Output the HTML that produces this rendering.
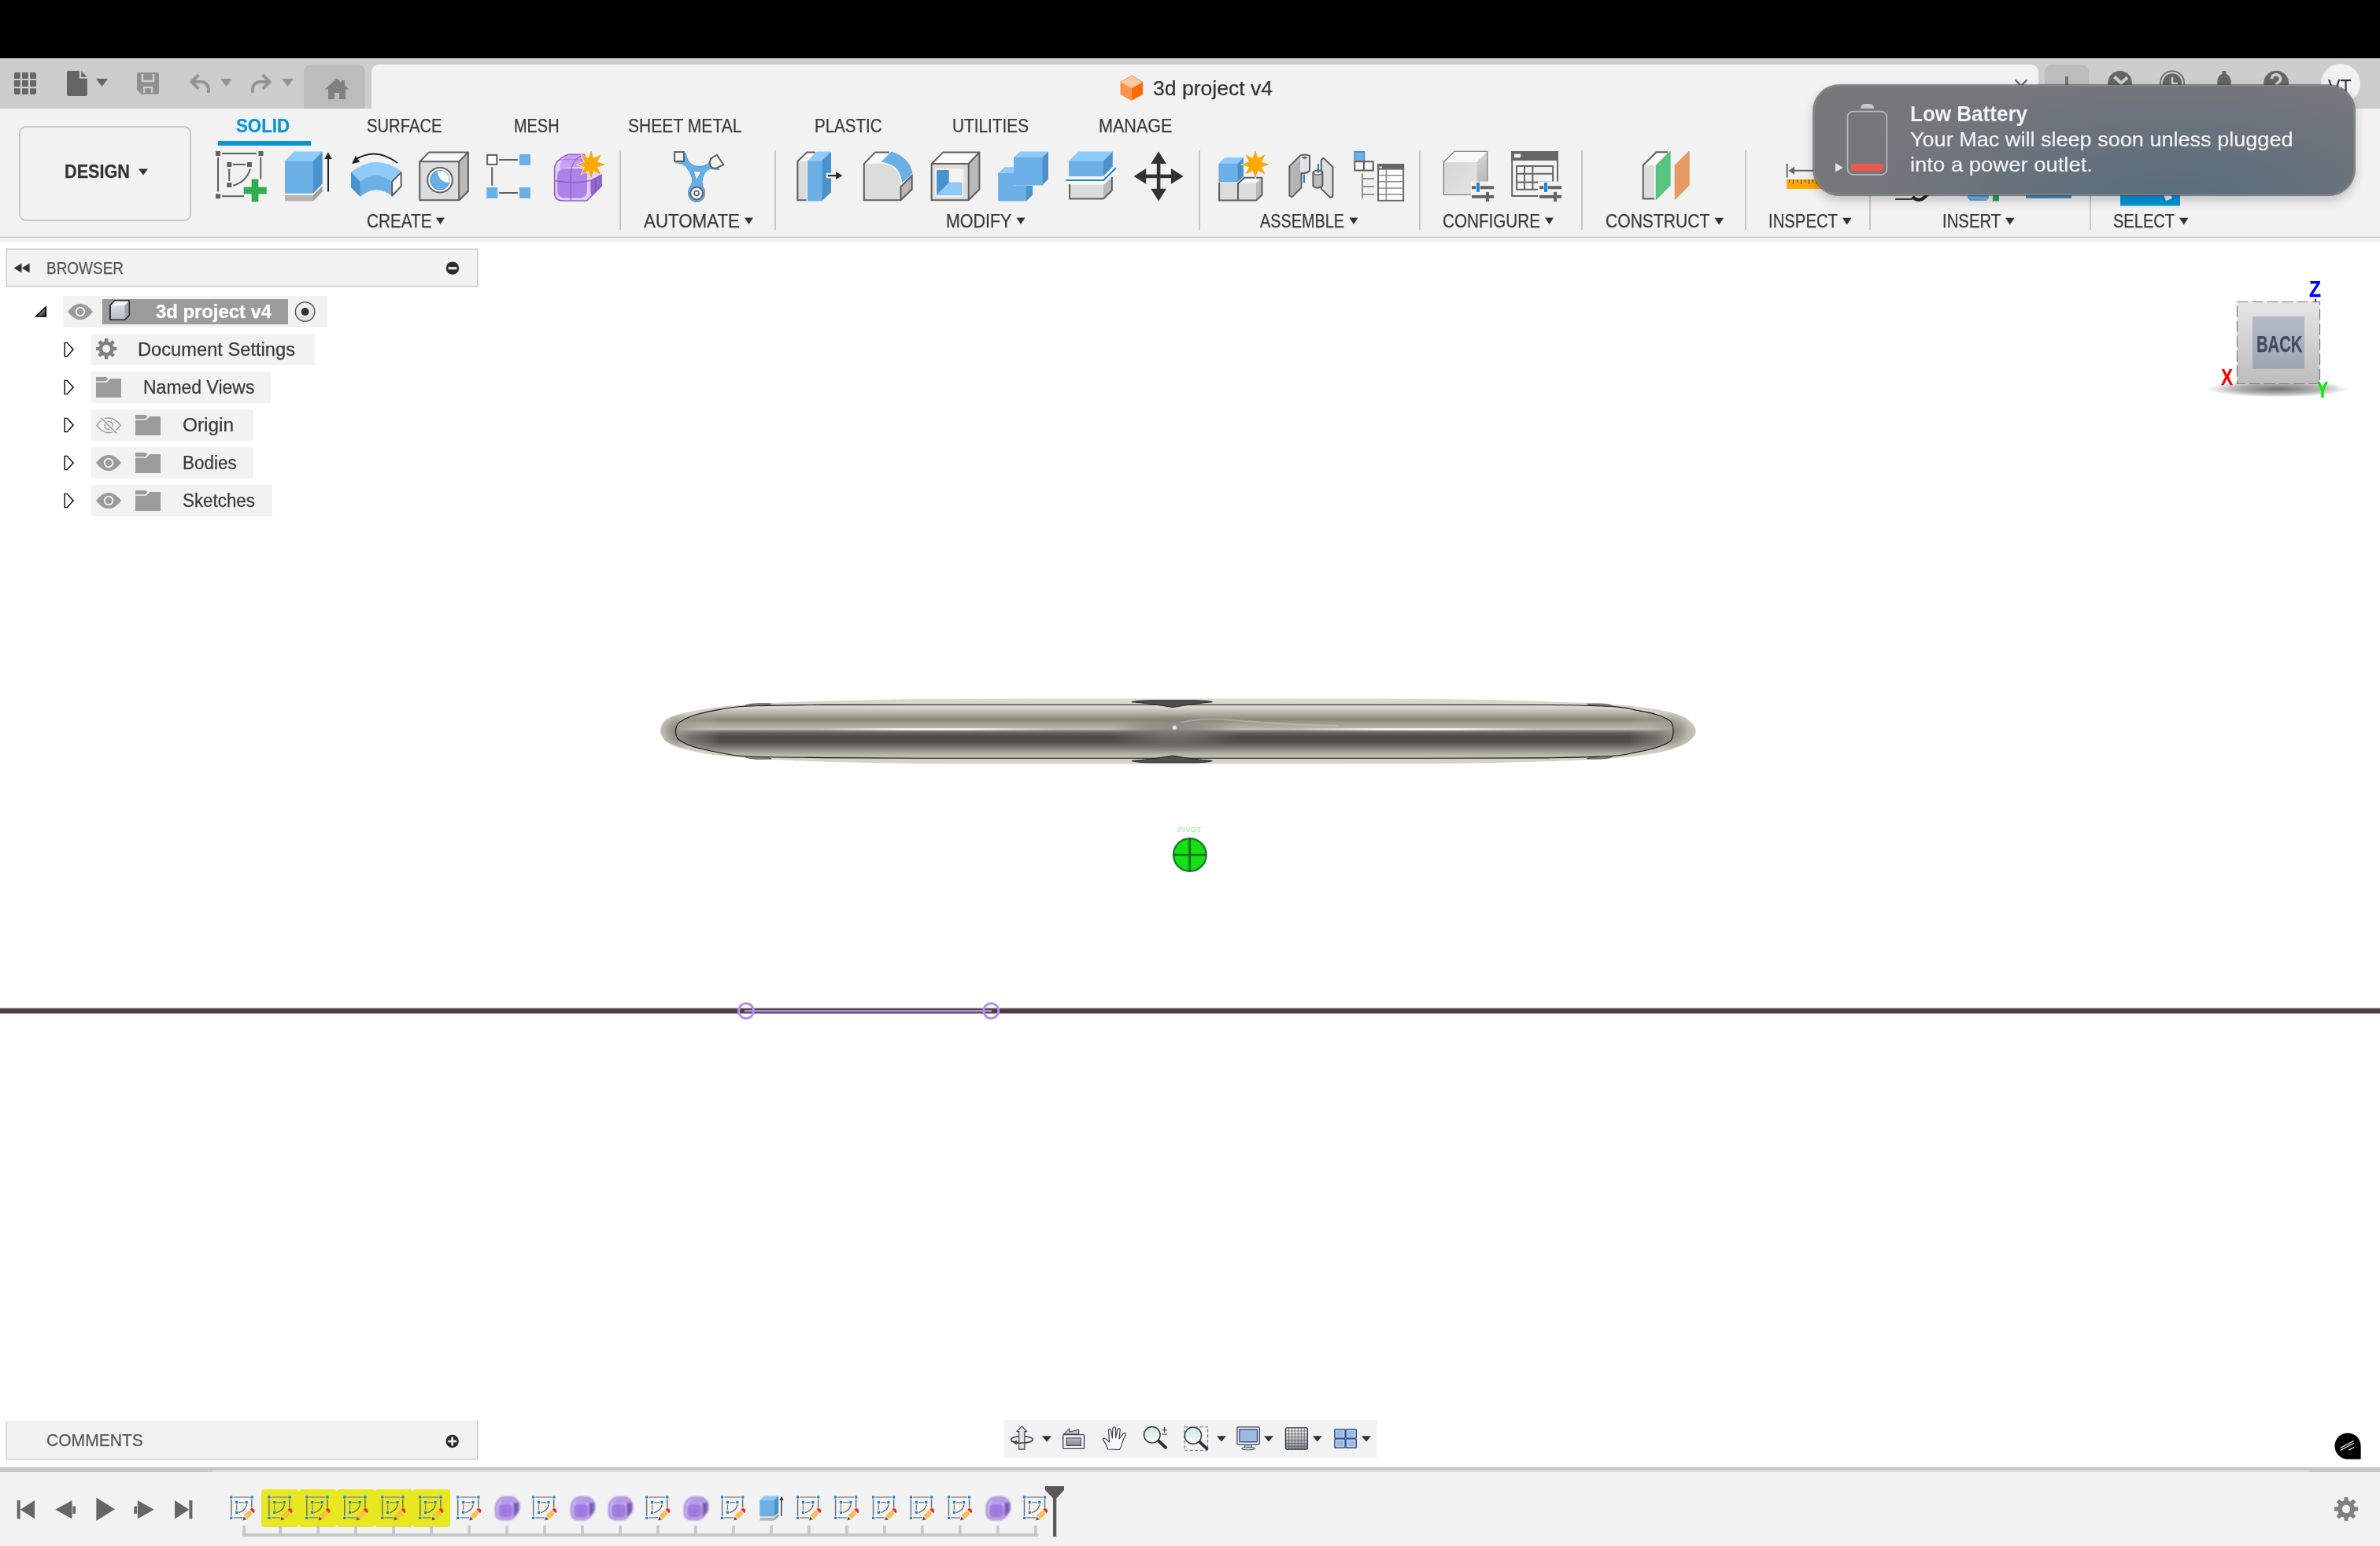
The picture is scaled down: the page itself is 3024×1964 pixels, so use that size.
<!DOCTYPE html>
<html><head><meta charset="utf-8"><title>Fusion</title>
<style>
*{margin:0;padding:0;box-sizing:border-box;}
html,body{width:3024px;height:1964px;overflow:hidden;background:#fff;font-family:"Liberation Sans",sans-serif;}
body{position:relative;}
.a{position:absolute;}
.t{position:absolute;white-space:nowrap;line-height:1;}
svg{position:absolute;overflow:visible;}
.sep{top:191px;width:2px;height:101px;background:#c6c6c6;}
.t{-webkit-text-stroke:0.25px currentColor;}

</style></head><body>
<!-- top black bar -->
<div class="a" style="left:0;top:0;width:3024px;height:74px;background:#000;"></div>
<!-- tab strip -->
<div class="a" style="left:0;top:74px;width:3024px;height:64px;background:#cdcdcd;"></div>
<div class="a" style="left:386px;top:82px;width:78px;height:56px;background:#bcbcbc;border-radius:9px 9px 0 0;"></div>
<div class="a" style="left:472px;top:82px;width:2118px;height:56px;background:#f2f2f2;border-radius:9px 9px 0 0;"></div>
<div class="a" style="left:2598px;top:82px;width:56px;height:56px;background:#bdbdbd;border-radius:9px 9px 0 0;"></div>
<div class="a" style="left:2948.800px;top:80.900px;width:50px;height:50px;background:#f1f1f1;border-radius:50%;"></div>
<!-- toolbar -->
<div class="a" style="left:0;top:138px;width:3024px;height:170px;background:#f2f2f2;"></div>
<div class="a" style="left:0;top:301px;width:3024px;height:1px;background:#c8c8c8;"></div><div class="a" style="left:0;top:300px;width:3024px;height:3px;background:rgba(200,200,200,0.25);"></div>
<div class="a" style="left:23.500px;top:159.500px;width:219.500px;height:121px;border:2px solid #c8c8c8;border-radius:9px;"></div>
<div class="a" style="left:277px;top:179px;width:118px;height:6px;background:#0696d7;"></div>
<!-- toolbar separators -->
<div class="a sep" style="left:787px;"></div>
<div class="a sep" style="left:984px;"></div>
<div class="a sep" style="left:1523px;"></div>
<div class="a sep" style="left:1803px;"></div>
<div class="a sep" style="left:2009px;"></div>
<div class="a sep" style="left:2217px;"></div>
<div class="a sep" style="left:2375px;"></div>
<div class="a sep" style="left:2655px;"></div>
<!-- browser header -->
<div class="a" style="left:8px;top:316px;width:599px;height:48px;background:#f2f2f2;border:1px solid #c4c4c4;box-shadow:0 0 0 1px rgba(200,200,200,0.35);"></div>
<!-- browser rows -->
<div class="a" style="left:80px;top:376px;width:336px;height:40px;background:#f2f2f2;"></div>
<div class="a" style="left:130px;top:380px;width:236px;height:32px;background:#9b9b9b;"></div>
<div class="a" style="left:116px;top:424px;width:284px;height:40px;background:#f2f2f2;"></div>
<div class="a" style="left:116px;top:472px;width:228px;height:40px;background:#f2f2f2;"></div>
<div class="a" style="left:116px;top:520px;width:206px;height:40px;background:#f2f2f2;"></div>
<div class="a" style="left:116px;top:568px;width:206px;height:40px;background:#f2f2f2;"></div>
<div class="a" style="left:116px;top:616px;width:230px;height:40px;background:#f2f2f2;"></div>
<!-- canvas line -->
<div class="a" style="left:0;top:1282px;width:3024px;height:4px;background:#4e3f3f;"></div>
<!-- bottom -->
<div class="a" style="left:8px;top:1806px;width:599px;height:48px;background:#f2f2f2;border:1px solid #c4c4c4;border-top:none;box-shadow:0 0 0 1px rgba(200,200,200,0.35);"></div>
<div class="a" style="left:1276px;top:1804px;width:474px;height:48px;background:#f2f2f2;"></div>
<div class="a" style="left:0;top:1864px;width:3024px;height:6px;background:#c8c8c8;"></div><div class="a" style="left:270px;top:1868px;width:2664px;height:2px;background:#dedede;"></div>
<div class="a" style="left:0;top:1870px;width:3024px;height:94px;background:#f2f2f2;"></div>
<!-- timeline yellow highlight -->
<div class="a" style="left:332.2px;top:1892px;width:48.100px;height:48px;background:#e7e81f;border-radius:4px;"></div><div class="a" style="left:380.2px;top:1892px;width:48.100px;height:48px;background:#e7e81f;border-radius:4px;"></div><div class="a" style="left:428.3px;top:1892px;width:48.100px;height:48px;background:#e7e81f;border-radius:4px;"></div><div class="a" style="left:476.3px;top:1892px;width:48.100px;height:48px;background:#e7e81f;border-radius:4px;"></div><div class="a" style="left:524.4px;top:1892px;width:48.100px;height:48px;background:#e7e81f;border-radius:4px;"></div>
<svg width="3024" height="1964" viewBox="0 0 3024 1964" style="left:0;top:0;"><!-- quick access: grid -->
<rect x="17.900" y="92" width="28.100" height="28.100" rx="2.300" fill="#666"/>
<path d="M26.900 91 V121 M36.950 91 V121 M17 101 H47 M17 111.050 H47" stroke="#cdcdcd" stroke-width="2.200" fill="none"/>
<!-- file -->
<path d="M87 90 H100.800 V99.800 H110.900 V120 a2 2 0 0 1 -2 2 H87 a2 2 0 0 1 -2 -2 V92 a2 2 0 0 1 2 -2 z" fill="#656565"/>
<path d="M103.200 90.300 L110.700 97.800 H103.200 z" fill="#656565"/>
<path d="M122 100 H137.100 L129.550 110.100 z" fill="#666"/>
<!-- save -->
<path d="M176 92.100 h24 a2 2 0 0 1 2 2 v23.700 a2 2 0 0 1 -2 2 h-20.200 l-5.800 -5.800 v-19.900 a2 2 0 0 1 2 -2 z" fill="#909090"/>
<path d="M181 94 V103 H195 V94" fill="none" stroke="#cdcdcd" stroke-width="2.300"/>
<path d="M183.100 118 V111.200 H193 V118" fill="none" stroke="#cdcdcd" stroke-width="2.200"/>
<!-- undo -->
<path d="M252.300 95 L243.400 103.900 L252.300 112.800 M244 103.900 H255.500 A9.500 9.500 0 0 1 265 113.400 V117.700" fill="none" stroke="#939393" stroke-width="3.900" stroke-linejoin="miter"/>
<path d="M280.100 100 H295 L287.550 110 z" fill="#939393"/>
<!-- redo -->
<path d="M333.700 95 L342.600 103.900 L333.700 112.800 M342 103.900 H330.500 A9.500 9.500 0 0 0 321 113.400 V117.700" fill="none" stroke="#939393" stroke-width="3.900" stroke-linejoin="miter"/>
<path d="M358.100 100 H372.900 L365.500 110 z" fill="#939393"/>
<!-- home -->
<path d="M428 99.5 l-15.5 14 h4.5 v12.5 h8 v-8 h6 v8 h8 v-12.5 h4.5 l-5.5 -5 v-6.500 h-4 v3 z" fill="#808080"/>
<!-- tab close x -->
<path d="M2560.500 101.500 l15 15 M2575.500 101.500 l-15 15" stroke="#666" stroke-width="2.400" fill="none"/>
<!-- plus -->
<path d="M2626 97 v26 M2613 110 h26" stroke="#777" stroke-width="4" fill="none"/>
<!-- right icons -->
<circle cx="2693.600" cy="105.400" r="15.400" fill="#666"/>
<path d="M2686.500 97.500 L2695 105.500 L2703 98.500" stroke="#cdcdcd" stroke-width="4" fill="none"/>
<circle cx="2760" cy="105.600" r="15.200" fill="none" stroke="#666" stroke-width="1.700"/>
<circle cx="2760" cy="105.600" r="12.300" fill="#666"/>
<path d="M2760 98 v8 h7" stroke="#cdcdcd" stroke-width="2.6" fill="none"/>
<path d="M2823.500 90 h5 v3.800 a8.600 10.500 0 0 1 6.200 10.500 v12 l3 4 h-23.400 l3 -4 v-12 a8.600 10.500 0 0 1 6.200 -10.500 z" fill="#666"/>
<circle cx="2892.100" cy="105.800" r="16" fill="#666"/>
<path d="M2886.500 100 a5.500 5.500 0 1 1 8 5 q-2.500 1.500 -2.500 5" stroke="#cdcdcd" stroke-width="3.6" fill="none"/>
<circle cx="2892" cy="115.500" r="2.200" fill="#cdcdcd"/>
<!-- DESIGN arrow -->
<path d="M176 214.500 h12 l-6 8 z" fill="#333"/>
<!-- doc cube -->
<path d="M1437.800 96.100 L1451.900 104.200 L1437.800 112.100 L1424 104.200 z" fill="#ffc8a0"/>
<path d="M1424 104.200 L1437.800 112.100 V127.600 L1424 119.800 z" fill="#ff9248"/>
<path d="M1451.900 104.200 L1437.800 112.100 V127.600 L1451.900 119.800 z" fill="#ff6a00"/>
<path d="M1437.800 96.100 L1451.900 104.200 V119.800 L1437.800 127.600 L1424 119.800 V104.200 z" fill="none" stroke="#e8782a" stroke-width="0.700"/>
<!-- group label arrows -->
<g fill="#333">
<path d="M554 276.600 h11 l-5.500 8.400 z"/>
<path d="M946 276.600 h11 l-5.500 8.400 z"/>
<path d="M1291.500 276.600 h11 l-5.500 8.400 z"/>
<path d="M1714.500 276.600 h11 l-5.500 8.400 z"/>
<path d="M1963 276.600 h11 l-5.500 8.400 z"/>
<path d="M2178.500 276.800 h11.500 l-5.750 8.600 z"/>
<path d="M2341 276.800 h11.500 l-5.750 8.600 z"/>
<path d="M2548 276.800 h11.500 l-5.750 8.600 z"/>
<path d="M2769 276.800 h11.500 l-5.750 8.600 z"/>
</g>
<!-- Create sketch -->
<g fill="#606060" stroke="none">
<rect x="274" y="192" width="6" height="6"/><rect x="328.500" y="192" width="6" height="6"/><rect x="274" y="246.300" width="6" height="6"/>
<rect x="288.300" y="206" width="6" height="6"/><rect x="314" y="206" width="6" height="6"/><rect x="288.300" y="232" width="6" height="6"/>
</g>
<g stroke="#5e5e5e" stroke-width="2" fill="none">
<path d="M282 195 H326 M277 200 V243.500 M331.300 200 V227.600 M282 249.200 H310 M296.300 209 H312 M291.200 214.500 V230"/>
<path d="M318 214.500 Q313 231 296.300 235.700"/>
</g>
<path d="M320 228 h8 v10 h10.300 v8 h-10.300 v10 h-8 v-10 h-10 v-8 h10 z" fill="#2bb04a" stroke="#1f9d3f" stroke-width="0.600"/>
<!-- Extrude -->
<path d="M362 204.200 H398 V245.800 H362 z" fill="#6aafe6"/>
<path d="M362 204.200 L373.700 192.400 H409.700 L398 204.200 z" fill="#8fcbfa"/>
<path d="M398 204.200 L409.700 192.400 V233.200 L398 245.800 z" fill="#4893ce"/>
<path d="M362 248 H398 V255.600 H362 z" fill="#b6b6b6"/>
<path d="M398 248 L409.700 236 V243.500 L398 255.600 z" fill="#a0a0a0"/>
<path d="M417 243.500 V200" stroke="#222" stroke-width="2" fill="none"/>
<path d="M417 193.500 l4.800 8.500 h-9.600 z" fill="#222"/>
<!-- Revolve -->
<path d="M505 207 Q478 186 451 203" stroke="#222" stroke-width="2" fill="none"/>
<path d="M447 208.300 l5 -10.500 l5.200 8 z" fill="#222"/>
<path d="M446 218.600 Q477 194 509.600 217 L498.200 230.700 Q477 214.500 457.800 230.700 z" fill="#8fcbfa"/>
<path d="M457.800 230.700 Q477 214.500 498.200 230.700 V248.800 Q477 233 457.800 249.900 z" fill="#6aafe6"/>
<path d="M446 218.600 L457.800 230.700 V249.900 L446 238.200 z" fill="#4893ce"/>
<path d="M498.200 230.700 L509.600 219 V236.700 L498.200 248.800 z" fill="#fff" stroke="#5e5e5e" stroke-width="2" stroke-linejoin="round"/>
<!-- Hole -->
<path d="M532.300 204.200 L544.100 192.400 H595.800 L584.200 204.200 z" fill="#f6f6f6"/>
<path d="M584.200 204.200 L595.800 192.400 V243.500 L584.200 255.200 z" fill="#b9b9b9"/>
<path d="M532.300 204.200 H584.200 V255.200 H532.300 z" fill="#dcdcdc"/>
<path d="M533.300 205.200 L545.100 193.400 H594.800 V243 L583.200 254.200 H533.300 z M533.300 205.200 H583.200 V254.200 M583.200 205.200 L594.800 193.400" fill="none" stroke="#5e5e5e" stroke-width="2" stroke-linejoin="miter"/>
<circle cx="559" cy="228.700" r="15.800" fill="#fff" stroke="#5e5e5e" stroke-width="2"/>
<circle cx="559" cy="228.700" r="12.300" fill="#6aafe6" stroke="#4a8cc4" stroke-width="1"/>
<clipPath id="hc"><circle cx="559" cy="228.700" r="11.800"/></clipPath><circle cx="569.500" cy="218.500" r="13.200" fill="#fff" clip-path="url(#hc)"/>
<!-- Pattern -->
<rect x="619.200" y="196.900" width="12" height="12" fill="#fff" stroke="#5e5e5e" stroke-width="2"/>
<rect x="660" y="195.900" width="14" height="14" fill="#6aafe6"/>
<rect x="618.200" y="238" width="14" height="14" fill="#6aafe6"/>
<rect x="660" y="238" width="14" height="14" fill="#6aafe6"/>
<path d="M634.300 203 H657.800 M625.200 212.200 V235.700 M634.300 245 H657.800" stroke="#5e5e5e" stroke-width="2" fill="none"/>
<!-- Form -->
<clipPath id="fclip"><path d="M722.200 196.300 H742 L764.100 222 V236.400 L745.400 255.100 H715.200 Q704.600 255.100 704.600 244.500 V214.200 Q705 203 722.200 196.300 z"/></clipPath>
<path d="M722.200 196.300 H742 L764.100 222 V236.400 L745.400 255.100 H715.200 Q704.600 255.100 704.600 244.500 V214.200 Q705 203 722.200 196.300 z" fill="#e0ccf8"/>
<g clip-path="url(#fclip)">
<path d="M712 208 Q716 199 724 197 H745 L760 212 H728 Q722 212 712 214 z" fill="#c89dfd"/>
<rect x="708.100" y="214.200" width="37.800" height="37.400" rx="8.500" fill="#ab82e8"/>
<path d="M750.300 229 Q757 226 764.100 221 V236.400 L752 249 Q750.300 246 750.300 242 z" fill="#9265d0"/>
<path d="M725.300 254.500 V222 Q725.300 205 738 198 M705 229.500 Q728 234 749.500 229.500 Q757 227 763.500 223 M756.700 226.500 V244" stroke="#7a54b0" stroke-width="1.300" fill="none" opacity="0.750"/>
<path d="M708 203.500 Q730 201 744 204" stroke="#9a70d0" stroke-width="1.200" fill="none" opacity="0.700"/>
</g>
<path d="M722.200 196.300 H742 L764.100 222 V236.400 L745.400 255.100 H715.200 Q704.600 255.100 704.600 244.500 V214.200 Q705 203 722.200 196.300 z" fill="none" stroke="#8a5fc4" stroke-width="1.500" stroke-linejoin="round"/>
<path d="M751.0,189.7 L754.8,199.8 L764.6,195.4 L760.2,205.2 L770.3,209.0 L760.2,212.8 L764.6,222.6 L754.8,218.2 L751.0,228.3 L747.2,218.2 L737.4,222.6 L741.8,212.8 L731.7,209.0 L741.8,205.2 L737.4,195.4 L747.2,199.8 z" fill="#f6f2ea"/><path d="M751.0,192.2 L754.1,201.6 L762.9,197.1 L758.4,205.9 L767.8,209.0 L758.4,212.1 L762.9,220.9 L754.1,216.4 L751.0,225.8 L747.9,216.4 L739.1,220.9 L743.6,212.1 L734.2,209.0 L743.6,205.9 L739.1,197.1 L747.9,201.6 z" fill="#ffa800" stroke="#e69600" stroke-width="0.600"/>
<!-- Automate -->
<path d="M858.400 206.800 Q867 207.500 871.500 211.500 Q877 218 879.500 226 Q880.500 232 877.500 236 Q874 240 874.500 246 A10.600 10.600 0 0 0 895.700 246 Q896 240 892.600 236 Q891.500 230 892.800 225.500 Q896 217 902 214.300 L913.800 215.600 L903 200 Q902 208 895 210.500 Q886.600 213 879 209 Q872.500 204.500 871.500 194.500 z" fill="#66b0e6" stroke="#4a94cf" stroke-width="0.900" stroke-linejoin="round"/>
<path d="M881 217.300 L891.100 217.800 L885.100 229.400 z" fill="#f2f2f2" stroke="#4a94cf" stroke-width="0.900" stroke-linejoin="round"/>
<rect x="857.100" y="193.100" width="11.800" height="11.800" fill="#f4f4f4" stroke="#5e5e5e" stroke-width="2"/>
<path d="M910.800 196.900 L919.400 209.200 L908.800 214.200 Q900.800 212.500 902 205 Q903 200.500 910.800 196.900 z" fill="#f4f4f4" stroke="#5e5e5e" stroke-width="2" stroke-linejoin="round"/>
<circle cx="885.100" cy="245.500" r="7.900" fill="#f4f4f4" stroke="#5e5e5e" stroke-width="2"/>
<circle cx="885.100" cy="245.500" r="3" fill="none" stroke="#5c5c5c" stroke-width="1.500"/>
<!-- Press pull -->
<path d="M1013.400 205 L1025.200 193.400 H1036 L1025 205 z" fill="#fafafa"/>
<path d="M1013.400 205 H1025 V254.200 H1013.400 z" fill="#dcdcdc"/>
<path d="M1024.500 254.200 H1013.400 V205 L1025.200 193.400 H1036" fill="none" stroke="#5e5e5e" stroke-width="2"/>
<path d="M1026 204.200 H1044.200 V255.600 H1026 z" fill="#6aafe6"/>
<path d="M1026 204.200 L1037.800 192.400 H1056 L1044.200 204.200 z" fill="#8fcbfa"/>
<path d="M1044.200 204.200 L1056 192.400 V244.300 L1044.200 255.600 z" fill="#4893ce"/>
<rect x="1050" y="219.800" width="7" height="6.600" fill="#f6f6f6"/>
<path d="M1052 223.100 H1063" stroke="#2a2a2a" stroke-width="2.200" fill="none"/>
<path d="M1062 218.200 L1070.500 223.100 L1062 228.100 z" fill="#2a2a2a"/>
<!-- Fillet -->
<path d="M1097.800 208 L1112 193.400 H1130 L1119.500 205.700 z" fill="#fafafa"/>
<path d="M1097.800 208 H1121 Q1144.500 210 1144.500 237.500 V254.200 H1097.800 z" fill="#dcdcdc"/>
<path d="M1144.500 237.500 L1159.600 222.400 V240.500 L1144.500 254.800 z" fill="#b9b9b9"/>
<path d="M1119.500 205.700 L1132.400 192.400 Q1155 199 1159.600 220 L1146 233 Q1144 209 1119.500 205.700 z" fill="#6aafe6"/>
<path d="M1121 207 Q1145 210 1145.500 235" fill="none" stroke="#f4f4f4" stroke-width="1.400"/>
<path d="M1129.500 193.400 H1112 L1097.800 208 V254.200 H1144.500 L1158.600 240.500 V223.500 L1144.500 237.500 V254.200" fill="none" stroke="#5e5e5e" stroke-width="2"/>
<!-- Shell -->
<path d="M1183.600 208 L1198.400 193.400 H1244.400 L1230.700 208 z" fill="#fafafa"/>
<path d="M1230.700 208 L1244.400 193.400 V240.500 L1230.700 254.200 z" fill="#b9b9b9"/>
<path d="M1183.600 208 H1230.700 V254.200 H1183.600 z" fill="#dcdcdc"/>
<rect x="1188" y="214" width="36.200" height="36" fill="#f4f4f4"/>
<path d="M1190.100 216 H1205.700 V232.200 L1190.100 247.600 z" fill="#4893ce"/>
<path d="M1190.100 247.600 L1205.700 232.200 H1222 V247.600 z" fill="#8fcbfa" stroke="#6aafe6" stroke-width="0.800"/>
<path d="M1183.600 208 L1198.400 193.400 H1244.400 V240.500 L1230.700 254.200 H1183.600 z M1183.600 208 H1230.700 V254.200 M1230.700 208 L1244.400 193.400" fill="none" stroke="#5e5e5e" stroke-width="2"/>
<!-- Combine -->
<path d="M1288 200 H1324.200 V235.500 H1288 z" fill="#6aafe6"/>
<path d="M1288 200 L1296 192.400 H1332 L1324.200 200 z" fill="#8fcbfa"/>
<path d="M1324.200 200 L1332 192.400 V227.600 L1324.200 235.500 z" fill="#4893ce"/>
<path d="M1268.200 220 L1276.500 212.200 H1288 V220 z" fill="#8fcbfa"/>
<path d="M1268.200 220 H1288 V235.500 H1304 V255.600 H1268.200 z" fill="#6aafe6"/>
<path d="M1304 236 H1312 V247.700 L1304 255.600 z" fill="#4893ce"/>
<!-- Split body -->
<path d="M1358 204.200 H1402 V223.900 H1358 z" fill="#6aafe6"/>
<path d="M1358 204.200 L1370 192.400 H1413.800 L1402 204.200 z" fill="#8fcbfa"/>
<path d="M1402 204.200 L1413.800 192.400 V211.800 L1402 223.900 z" fill="#4893ce"/>
<path d="M1359 235 H1402 V252.600 H1359 z" fill="#dcdcdc"/>
<path d="M1402 235 L1412.800 225 V242 L1402 252.600 z" fill="#b9b9b9"/>
<path d="M1359 234 V252.600 H1402 L1412.800 242 V225" fill="none" stroke="#5e5e5e" stroke-width="2"/>
<path d="M1354 228.900 H1402.300 L1418 213.300" fill="none" stroke="#f8f8f8" stroke-width="7"/>
<path d="M1354 228.900 H1402.300 L1418 213.300" fill="none" stroke="#1a86e0" stroke-width="2"/>
<!-- Move -->
<g fill="#333">
<rect x="1469.800" y="205" width="4.600" height="38"/><rect x="1453" y="221.600" width="38" height="4.600"/>
<path d="M1472.100 192.400 L1482 208 H1462.200 z"/><path d="M1472.100 255.400 L1482 239.800 H1462.200 z"/>
<path d="M1440.600 223.900 L1456.200 214 V233.800 z"/><path d="M1503.700 223.900 L1488 214 V233.800 z"/>
</g>
<!-- New component -->
<path d="M1549.400 232.400 H1572.200 V254.200 H1549.400 z" fill="#dcdcdc"/>
<path d="M1573.700 232.400 H1596 V254.200 H1573.700 z" fill="#dcdcdc"/>
<path d="M1573.700 232.400 L1581.500 224.400 H1603.800 L1596 232.400 z" fill="#f8f8f8"/>
<path d="M1596 232.400 L1603.800 224.400 V247.300 L1596 254.200 z" fill="#b9b9b9"/>
<path d="M1549.100 231.800 V254.600 H1596.100 L1603.500 247.600 V225.700 H1581 L1573 233.200 V254.600" fill="none" stroke="#5e5e5e" stroke-width="2" stroke-linejoin="miter"/>
<path d="M1548.400 208 H1572.200 V231.400 H1548.400 z" fill="#6aafe6"/>
<path d="M1548.400 208 L1556.300 200 H1580 L1572.200 208 z" fill="#8fcbfa"/>
<path d="M1572.200 208 L1580 200 V223.900 L1572.200 231.400 z" fill="#4893ce"/>
<path d="M1595.0,189.6 L1598.8,199.7 L1608.6,195.3 L1604.2,205.1 L1614.3,208.9 L1604.2,212.7 L1608.6,222.5 L1598.8,218.1 L1595.0,228.2 L1591.2,218.1 L1581.4,222.5 L1585.8,212.7 L1575.7,208.9 L1585.8,205.1 L1581.4,195.3 L1591.2,199.7 z" fill="#f6f2ea"/><path d="M1595.0,192.3 L1598.1,201.5 L1606.7,197.2 L1602.4,205.8 L1611.6,208.9 L1602.4,212.0 L1606.7,220.6 L1598.1,216.3 L1595.0,225.5 L1591.9,216.3 L1583.3,220.6 L1587.6,212.0 L1578.4,208.9 L1587.6,205.8 L1583.3,197.2 L1591.9,201.5 z" fill="#ffa800" stroke="#e69600" stroke-width="0.600"/>
<!-- Joint -->
<path d="M1638.400 211.100 L1652 197.600 Q1658 195 1664 198 V217 Q1660 221 1653.500 220 V238.300 L1641.600 250.300 L1638.400 248.700 z" fill="#bdbdbd" stroke="#5e5e5e" stroke-width="2" stroke-linejoin="round"/>
<path d="M1641.600 213 L1652 202.500 V237.500 L1641.600 248 z" fill="#b4b4b4"/>
<path d="M1652 199 Q1658 196.500 1663 199 V216.500 Q1658 219.500 1652 218 z" fill="#e2e2e2"/>
<ellipse cx="1657.500" cy="200.200" rx="3" ry="1.500" fill="#666"/>
<path d="M1657 221.800 V232" stroke="#1a86e0" stroke-width="2.200"/>
<path d="M1678.800 203.200 L1681.500 200.800 L1693.400 212 V249.500 L1690.300 251 L1678.800 239.900 z" fill="#dedede" stroke="#5e5e5e" stroke-width="2" stroke-linejoin="round"/>
<path d="M1668.400 219 Q1674 214 1680.400 218 V236 Q1674 241 1668.400 236.500 z" fill="#bdbdbd" stroke="#5e5e5e" stroke-width="2" stroke-linejoin="round"/>
<ellipse cx="1674.400" cy="219.500" rx="5" ry="2.600" fill="#ececec" stroke="#606060" stroke-width="1.200"/>
<path d="M1675 208 V219.600" stroke="#1a86e0" stroke-width="2.200"/>
<!-- BOM -->
<rect x="1721" y="192.700" width="12.500" height="12.500" fill="#6aafe6" stroke="#4a8cc4" stroke-width="1.400"/>
<path d="M1721.300 205.300 H1744.700 V216.500 H1721.300 z M1733 205.300 V216.500" fill="#f6f6f6" stroke="#5e5e5e" stroke-width="2"/>
<path d="M1731 220.200 V252 M1731 227.100 H1746 M1731 237 H1746 M1731 247 H1746" stroke="#929292" stroke-width="2" fill="none"/>
<rect x="1751.100" y="209" width="32" height="45.800" fill="#fff" stroke="#666" stroke-width="2"/>
<rect x="1750.100" y="208" width="34" height="7.600" fill="#666"/>
<rect x="1752.500" y="211.500" width="3.500" height="2" fill="#f0f0f0"/>
<path d="M1761.300 216 V254 M1752 222.800 H1783 M1752 230.800 H1783 M1752 239 H1783 M1752 247 H1783" stroke="#8c8c8c" stroke-width="1.600" fill="none"/>
<defs>
<linearGradient id="cg1" x1="0" y1="0" x2="1" y2="1"><stop offset="0" stop-color="#d6d6d6"/><stop offset="1" stop-color="#e4e4e4"/></linearGradient>
<linearGradient id="cg2" x1="0" y1="0" x2="0" y2="1"><stop offset="0" stop-color="#d4d4d4"/><stop offset="1" stop-color="#b2b2b2"/></linearGradient>
</defs>
<!-- Configure cube -->
<path d="M1834.400 205.900 L1848 192.300 H1889.800 L1876.300 205.900 z" fill="#f8f8f8"/>
<path d="M1876.300 205.900 L1889.800 192.300 V234.300 L1876.300 247.500 z" fill="url(#cg2)"/>
<path d="M1834.400 205.900 H1876.300 V247.500 H1834.400 z" fill="url(#cg1)"/>
<path d="M1834.400 205.900 L1848 192.300 H1889.800 V234.300 L1876.300 247.500 H1834.400 z" fill="none" stroke="#6a6a6a" stroke-width="1.100"/>
<rect x="1869" y="230.500" width="30" height="27" fill="#f2f2f2"/>
<path d="M1834.400 247.500 H1869" stroke="#6a6a6a" stroke-width="1.100"/>
<rect x="1870" y="236.200" width="28.100" height="4" fill="#666"/>
<rect x="1870" y="247.900" width="28.100" height="4" fill="#666"/>
<rect x="1888" y="243.900" width="4" height="12.300" fill="#666"/>
<rect x="1875.300" y="231.200" width="5.400" height="13.400" fill="#f8f8f8"/>
<rect x="1876" y="231.900" width="4" height="12" fill="#1a86e0"/>
<!-- Config table -->
<rect x="1921.200" y="193" width="57.800" height="56" fill="#f2f2f2" stroke="#666" stroke-width="2"/>
<rect x="1920.200" y="192" width="59.800" height="12" fill="#666"/>
<rect x="1923.900" y="195.600" width="8.300" height="4.700" fill="#f2f2f2"/>
<path d="M1927 211 H1973.100 V240.800 H1927 z M1937 211 V240.800 M1947.400 211 V240.800 M1927 220.700 H1973 M1927 231.400 H1973" fill="none" stroke="#666" stroke-width="2"/>
<rect x="1954" y="230.500" width="32" height="27" fill="#f2f2f2"/>
<rect x="1956" y="236.200" width="28" height="4" fill="#666"/>
<rect x="1956" y="247.900" width="28" height="4" fill="#666"/>
<rect x="1974" y="243.900" width="4" height="12.300" fill="#666"/>
<rect x="1961.300" y="231.200" width="5.400" height="13.400" fill="#f8f8f8"/>
<rect x="1962" y="231.900" width="4" height="12" fill="#1a86e0"/>
<!-- Construct -->
<path d="M2087.700 210 L2104.500 193.300 H2119 L2102.200 210 z" fill="#fafafa"/>
<path d="M2087.700 210 H2102.200 V252.400 H2087.700 z" fill="#dcdcdc"/>
<path d="M2102.200 252.400 H2087.700 V210 L2104.500 193.300 H2119" fill="none" stroke="#5e5e5e" stroke-width="2"/>
<path d="M2104.300 210 L2122.100 192.300 V235.600 L2104.300 253.400 z" fill="#57c47f" stroke="#46b36e" stroke-width="0.800"/>
<path d="M2128.200 210 L2146.100 192.300 V235.600 L2128.200 253.400 z" fill="#e59a62" stroke="#d48a52" stroke-width="0.800"/>
<!-- Inspect -->
<path d="M2270.600 208 V225.500" stroke="#666" stroke-width="2" fill="none"/>
<path d="M2272.500 216.700 l7.500 -5 v10 z" fill="#666"/>
<path d="M2278 216.700 H2320" stroke="#666" stroke-width="2" fill="none"/>
<rect x="2270" y="227.900" width="60" height="12" fill="#ffa800"/>
<path d="M2273.500 228 v4 M2278.500 228 v6 M2283.500 228 v4 M2288.500 228 v6 M2293.500 228 v4 M2298.500 228 v6 M2303.500 228 v4 M2308.500 228 v6" stroke="#5a5a5a" stroke-width="1.200" fill="none"/>
<!-- Insert (partially hidden) -->
<path d="M2408 253 H2430" fill="none" stroke="#444" stroke-width="2"/>
<path d="M2430 250 q8 8 16 0 q6 -5 10 -10" fill="none" stroke="#222" stroke-width="4"/>
<path d="M2500 225 h27 v26 l-3 4 h-21 l-3 -4 z" fill="#5aa6dc"/>
<path d="M2502 251 l23 1.500" stroke="#8fcbfa" stroke-width="1.500"/>
<rect x="2532" y="226" width="8" height="29.500" fill="#1fa84a"/>
<rect x="2574" y="200" width="58" height="52" fill="#3d8fd0"/>
<!-- Select -->
<rect x="2694" y="196" width="76" height="65.500" fill="#0696d7"/>
<path d="M2746 240 l8 -4 l6 16 l-8 3 z" fill="#f4f4f4"/>
<path d="M27.500 334.500 V346.500 L17.600 340.500 z M37.600 334.500 V346.500 L27.700 340.500 z" fill="#333"/>
<circle cx="575" cy="340.600" r="8.200" fill="#2a2a2a"/><rect x="569.500" y="339" width="11" height="3.400" fill="#ddd"/>
<circle cx="574.700" cy="1831" r="8.200" fill="#2a2a2a"/><rect x="569.200" y="1829.600" width="11" height="2.800" fill="#eee"/><rect x="573.300" y="1825.500" width="2.800" height="11" fill="#eee"/>
<defs><linearGradient id="exg" x1="0" y1="0" x2="1" y2="1"><stop offset="0.2" stop-color="#ddd"/><stop offset="1" stop-color="#000"/></linearGradient></defs>
<path d="M45.800 402 H58.300 V389.800 z" fill="url(#exg)" stroke="#000" stroke-width="1.600" stroke-linejoin="miter"/>
<path d="M86 396 Q94 385.7 102 385.7 Q110 385.7 118 396 Q110 406.3 102 406.3 Q94 406.3 86 396 z" fill="#9b9b9b"/><circle cx="102" cy="396" r="5.300" fill="none" stroke="#f2f2f2" stroke-width="1.800"/>
<defs><linearGradient id="rcg" x1="0" y1="0" x2="0" y2="1"><stop offset="0" stop-color="#e4e6ec"/><stop offset="1" stop-color="#b4bac6"/></linearGradient></defs>
<path d="M140 388 L145.500 382 H164.300 V400.500 L158.500 406.300 H140 z" fill="url(#rcg)" stroke="#1a1a1a" stroke-width="1.200" stroke-linejoin="round"/>
<path d="M140 388 L145.500 382 H164.300 L158.500 388 z" fill="#f4f5f8"/><path d="M158.500 388 L164.300 382 V400.500 L158.500 406.300 z" fill="#9aa3b2"/>
<path d="M140 388 L145.500 382 H164.300 V400.500 L158.500 406.300 H140 z" fill="none" stroke="#1a1a1a" stroke-width="1.200" stroke-linejoin="round"/>
<defs><radialGradient id="rdg" cx="0.5" cy="0.4" r="0.6"><stop offset="0" stop-color="#fff"/><stop offset="1" stop-color="#d8d8e0"/></radialGradient></defs>
<circle cx="387.600" cy="396" r="12.300" fill="url(#rdg)" stroke="#555" stroke-width="1.400"/><circle cx="387.600" cy="396" r="5" fill="#333"/>
<path d="M82.2 435.4 H85.3 L93.1 444 L85.3 452.6 H82.2 z" fill="#fff" stroke="#000" stroke-width="1.400" stroke-linejoin="miter"/>
<path d="M82.2 483.4 H85.3 L93.1 492 L85.3 500.6 H82.2 z" fill="#fff" stroke="#000" stroke-width="1.400" stroke-linejoin="miter"/>
<path d="M82.2 531.4 H85.3 L93.1 540 L85.3 548.6 H82.2 z" fill="#fff" stroke="#000" stroke-width="1.400" stroke-linejoin="miter"/>
<path d="M82.2 579.4 H85.3 L93.1 588 L85.3 596.6 H82.2 z" fill="#fff" stroke="#000" stroke-width="1.400" stroke-linejoin="miter"/>
<path d="M82.2 627.4 H85.3 L93.1 636 L85.3 644.6 H82.2 z" fill="#fff" stroke="#000" stroke-width="1.400" stroke-linejoin="miter"/>
<path d="M144.4,440.7 L148.1,440.8 L148.1,445.2 L144.4,445.3 L143.3,448.0 L145.8,450.7 L142.8,453.7 L140.1,451.2 L137.4,452.3 L137.3,456.0 L132.9,456.0 L132.8,452.3 L130.1,451.2 L127.4,453.7 L124.4,450.7 L126.9,448.0 L125.8,445.3 L122.1,445.2 L122.1,440.8 L125.8,440.7 L126.9,438.0 L124.4,435.3 L127.4,432.3 L130.1,434.8 L132.8,433.7 L132.9,430.0 L137.3,430.0 L137.4,433.7 L140.1,434.8 L142.8,432.3 L145.8,435.3 L143.3,438.0 z M140.1,443.0 a5,5 0 1,0 -10,0 a5,5 0 1,0 10,0 z" fill="#808080" fill-rule="evenodd"/>
<path d="M122 479 H135 L137.5 481 L134.5 484.2 H122 z" fill="#9b9b9b"/><path d="M122 485.8 H135.6 L140.4 481 H154 V505 H122 z" fill="#9b9b9b"/>
<path d="M122.7 540.4 Q130 531.1 138 531.1 Q146 531.1 153.3 540.4 Q146 549.6999999999999 138 549.6999999999999 Q130 549.6999999999999 122.7 540.4 z" fill="none" stroke="#9b9b9b" stroke-width="1.500"/><circle cx="138" cy="540.4" r="5" fill="none" stroke="#9b9b9b" stroke-width="1.400"/><path d="M128.3 530.6999999999999 L148 550.4" stroke="#f2f2f2" stroke-width="4.500"/><path d="M128.3 530.6999999999999 L148 550.4" stroke="#9b9b9b" stroke-width="1.600"/>
<path d="M172 527 H185 L187.5 529 L184.5 532.2 H172 z" fill="#9b9b9b"/><path d="M172 533.8 H185.6 L190.4 529 H204 V553 H172 z" fill="#9b9b9b"/>
<path d="M122 588 Q130 577.7 138 577.7 Q146 577.7 154 588 Q146 598.3 138 598.3 Q130 598.3 122 588 z" fill="#9b9b9b"/><circle cx="138" cy="588" r="5.300" fill="none" stroke="#f2f2f2" stroke-width="1.800"/>
<path d="M172 575 H185 L187.5 577 L184.5 580.2 H172 z" fill="#9b9b9b"/><path d="M172 581.8 H185.6 L190.4 577 H204 V601 H172 z" fill="#9b9b9b"/>
<path d="M122 636 Q130 625.7 138 625.7 Q146 625.7 154 636 Q146 646.3 138 646.3 Q130 646.3 122 636 z" fill="#9b9b9b"/><circle cx="138" cy="636" r="5.300" fill="none" stroke="#f2f2f2" stroke-width="1.800"/>
<path d="M172 623 H185 L187.5 625 L184.5 628.2 H172 z" fill="#9b9b9b"/><path d="M172 629.8 H185.6 L190.4 625 H204 V649 H172 z" fill="#9b9b9b"/><defs>
<linearGradient id="mg" x1="0" y1="895" x2="0" y2="963.500" gradientUnits="userSpaceOnUse">
<stop offset="0" stop-color="#dbdad5"/>
<stop offset="0.065" stop-color="#d5d3cc"/>
<stop offset="0.190" stop-color="#aaa69b"/>
<stop offset="0.280" stop-color="#8c8679"/>
<stop offset="0.365" stop-color="#a8a397"/>
<stop offset="0.430" stop-color="#b5b1a6"/>
<stop offset="0.455" stop-color="#c8c6be"/>
<stop offset="0.475" stop-color="#9a9894"/>
<stop offset="0.515" stop-color="#6a6864"/>
<stop offset="0.600" stop-color="#4a4845"/>
<stop offset="0.710" stop-color="#55534f"/>
<stop offset="0.820" stop-color="#85827b"/>
<stop offset="0.920" stop-color="#b5b2a7"/>
<stop offset="1" stop-color="#c6c3b8"/>
</linearGradient>
<linearGradient id="hl" x1="0" y1="0" x2="1" y2="0"><stop offset="0" stop-color="#fff" stop-opacity="0"/><stop offset="0.350" stop-color="#fff" stop-opacity="0.900"/><stop offset="0.650" stop-color="#fff" stop-opacity="0.900"/><stop offset="1" stop-color="#fff" stop-opacity="0"/></linearGradient>
<radialGradient id="tipsh" cx="0.500" cy="0.500" r="0.500"><stop offset="0" stop-color="#77746c" stop-opacity="0.900"/><stop offset="0.550" stop-color="#8a877d" stop-opacity="0.600"/><stop offset="1" stop-color="#a9a69b" stop-opacity="0"/></radialGradient>
<linearGradient id="mo" x1="0" y1="887" x2="0" y2="971" gradientUnits="userSpaceOnUse">
<stop offset="0" stop-color="#dedbd1"/><stop offset="0.500" stop-color="#c3c0b3"/><stop offset="1" stop-color="#d6d3c7"/>
</linearGradient>
<linearGradient id="mtl" x1="859" y1="0" x2="915" y2="0" gradientUnits="userSpaceOnUse">
<stop offset="0" stop-color="#9c998f" stop-opacity="0.900"/><stop offset="0.400" stop-color="#a5a298" stop-opacity="0.400"/><stop offset="1" stop-color="#c2bfb5" stop-opacity="0"/>
</linearGradient>
<linearGradient id="mtr" x1="2126" y1="0" x2="2070" y2="0" gradientUnits="userSpaceOnUse">
<stop offset="0" stop-color="#9c998f" stop-opacity="0.900"/><stop offset="0.400" stop-color="#a5a298" stop-opacity="0.400"/><stop offset="1" stop-color="#c2bfb5" stop-opacity="0"/>
</linearGradient>
<radialGradient id="mc" cx="1492" cy="931" r="1" gradientUnits="userSpaceOnUse" gradientTransform="translate(1492 931) scale(85 24) translate(-1492 -931)">
<stop offset="0" stop-color="#7f7e79" stop-opacity="0.850"/><stop offset="0.500" stop-color="#7a7974" stop-opacity="0.500"/><stop offset="1" stop-color="#7a7974" stop-opacity="0"/>
</radialGradient>
<radialGradient id="msp" cx="1492.500" cy="924.400" r="3.600" gradientUnits="userSpaceOnUse">
<stop offset="0" stop-color="#fff"/><stop offset="0.400" stop-color="#fff" stop-opacity="0.800"/><stop offset="1" stop-color="#fff" stop-opacity="0"/>
</radialGradient>
<clipPath id="mclip"><path d="M858.6 929.6 C858.6 927.7 858.7 925.5 859.5 923.5 C860.3 921.5 860.1 919.8 863.6 917.4 C867.1 915.0 872.0 911.7 880.4 909.0 C888.8 906.3 903.1 903.4 914.0 901.4 C924.9 899.4 926.7 898.2 946.0 897.2 C965.3 896.2 992.2 895.8 1030.0 895.5 C1067.8 895.2 1096.3 895.2 1173.0 895.2 C1249.7 895.2 1383.5 895.2 1490.0 895.2 C1596.5 895.2 1732.0 895.2 1812.0 895.2 C1892.0 895.2 1930.4 895.1 1970.0 895.5 C2009.6 895.9 2031.6 896.5 2049.8 897.6 C2068.0 898.7 2070.1 900.6 2079.2 902.3 C2088.3 904.0 2097.5 905.5 2104.5 907.7 C2111.5 909.9 2117.9 912.9 2121.3 915.3 C2124.8 917.7 2124.4 919.6 2125.2 922.0 C2126.0 924.4 2125.9 927.3 2125.9 929.6 C2125.9 931.9 2126.0 933.9 2125.2 936.0 C2124.4 938.1 2124.8 939.9 2121.3 942.2 C2117.9 944.5 2111.5 947.5 2104.5 949.7 C2097.5 951.9 2088.3 953.8 2079.2 955.6 C2070.1 957.4 2068.0 959.1 2049.8 960.3 C2031.6 961.5 2009.6 962.3 1970.0 962.8 C1930.4 963.3 1892.0 963.1 1812.0 963.2 C1732.0 963.3 1596.5 963.2 1490.0 963.2 C1383.5 963.2 1249.7 963.3 1173.0 963.2 C1096.3 963.1 1067.8 962.8 1030.0 962.4 C992.2 962.0 965.3 961.8 946.0 960.7 C926.7 959.6 924.9 958.0 914.0 956.0 C903.1 954.0 888.8 951.1 880.4 948.5 C872.0 945.9 867.1 942.8 863.6 940.5 C860.1 938.2 860.3 936.8 859.5 935.0 C858.7 933.2 858.6 931.5 858.6 929.6 z"/></clipPath>
</defs>
<!-- model outer -->
<clipPath id="oclip"><path d="M839.1 928.0 C839.1 925.7 839.7 923.4 841.0 921.0 C842.3 918.6 843.0 915.9 846.8 913.6 C850.6 911.3 856.6 909.3 863.6 907.3 C870.6 905.3 880.4 903.3 888.8 901.8 C897.2 900.2 904.2 899.2 914.0 898.0 C923.8 896.8 933.6 895.7 947.6 894.7 C961.6 893.7 984.3 892.8 998.0 892.2 C1011.7 891.6 1013.0 891.5 1030.0 891.0 C1047.0 890.5 1076.2 889.8 1100.0 889.3 C1123.8 888.8 1139.7 888.3 1173.0 888.0 C1206.3 887.7 1247.2 887.7 1300.0 887.6 C1352.8 887.5 1423.3 887.6 1490.0 887.6 C1556.7 887.6 1644.7 887.5 1700.0 887.6 C1755.3 887.7 1788.7 887.7 1822.0 888.0 C1855.3 888.3 1875.3 888.8 1900.0 889.3 C1924.7 889.8 1952.7 890.8 1970.0 891.3 C1987.3 891.8 1990.3 892.0 2003.6 892.6 C2016.9 893.2 2037.2 894.3 2049.8 895.1 C2062.4 895.9 2068.7 896.3 2079.2 897.6 C2089.7 898.9 2103.1 900.6 2112.9 902.7 C2122.7 904.8 2131.8 907.6 2138.0 910.3 C2144.2 913.0 2147.2 915.9 2150.0 919.0 C2152.8 922.1 2154.5 925.5 2154.5 928.7 C2154.5 931.9 2152.8 935.0 2150.0 938.0 C2147.2 941.0 2144.2 943.6 2138.0 946.4 C2131.8 949.2 2122.7 952.5 2112.9 954.8 C2103.1 957.1 2089.7 958.9 2079.2 960.3 C2068.7 961.7 2062.4 962.3 2049.8 963.2 C2037.2 964.1 2016.9 965.1 2003.6 965.7 C1990.3 966.3 1987.3 966.5 1970.0 967.0 C1952.7 967.5 1924.7 968.5 1900.0 969.0 C1875.3 969.5 1855.3 970.0 1822.0 970.2 C1788.7 970.4 1755.3 970.4 1700.0 970.4 C1644.7 970.4 1556.7 970.4 1490.0 970.4 C1423.3 970.4 1352.8 970.4 1300.0 970.4 C1247.2 970.4 1206.3 970.4 1173.0 970.2 C1139.7 970.0 1123.8 969.5 1100.0 969.0 C1076.2 968.5 1047.0 967.5 1030.0 967.0 C1013.0 966.5 1011.7 966.4 998.0 965.7 C984.3 965.0 961.6 963.8 947.6 962.8 C933.6 961.8 923.8 960.9 914.0 959.8 C904.2 958.7 897.2 957.7 888.8 956.0 C880.4 954.3 870.6 952.0 863.6 949.7 C856.6 947.4 850.6 944.7 846.8 942.2 C843.0 939.8 842.3 937.4 841.0 935.0 C839.7 932.6 839.1 930.3 839.1 928.0 z"/></clipPath>
<path d="M839.1 928.0 C839.1 925.7 839.7 923.4 841.0 921.0 C842.3 918.6 843.0 915.9 846.8 913.6 C850.6 911.3 856.6 909.3 863.6 907.3 C870.6 905.3 880.4 903.3 888.8 901.8 C897.2 900.2 904.2 899.2 914.0 898.0 C923.8 896.8 933.6 895.7 947.6 894.7 C961.6 893.7 984.3 892.8 998.0 892.2 C1011.7 891.6 1013.0 891.5 1030.0 891.0 C1047.0 890.5 1076.2 889.8 1100.0 889.3 C1123.8 888.8 1139.7 888.3 1173.0 888.0 C1206.3 887.7 1247.2 887.7 1300.0 887.6 C1352.8 887.5 1423.3 887.6 1490.0 887.6 C1556.7 887.6 1644.7 887.5 1700.0 887.6 C1755.3 887.7 1788.7 887.7 1822.0 888.0 C1855.3 888.3 1875.3 888.8 1900.0 889.3 C1924.7 889.8 1952.7 890.8 1970.0 891.3 C1987.3 891.8 1990.3 892.0 2003.6 892.6 C2016.9 893.2 2037.2 894.3 2049.8 895.1 C2062.4 895.9 2068.7 896.3 2079.2 897.6 C2089.7 898.9 2103.1 900.6 2112.9 902.7 C2122.7 904.8 2131.8 907.6 2138.0 910.3 C2144.2 913.0 2147.2 915.9 2150.0 919.0 C2152.8 922.1 2154.5 925.5 2154.5 928.7 C2154.5 931.9 2152.8 935.0 2150.0 938.0 C2147.2 941.0 2144.2 943.6 2138.0 946.4 C2131.8 949.2 2122.7 952.5 2112.9 954.8 C2103.1 957.1 2089.7 958.9 2079.2 960.3 C2068.7 961.7 2062.4 962.3 2049.8 963.2 C2037.2 964.1 2016.9 965.1 2003.6 965.7 C1990.3 966.3 1987.3 966.5 1970.0 967.0 C1952.7 967.5 1924.7 968.5 1900.0 969.0 C1875.3 969.5 1855.3 970.0 1822.0 970.2 C1788.7 970.4 1755.3 970.4 1700.0 970.4 C1644.7 970.4 1556.7 970.4 1490.0 970.4 C1423.3 970.4 1352.8 970.4 1300.0 970.4 C1247.2 970.4 1206.3 970.4 1173.0 970.2 C1139.7 970.0 1123.8 969.5 1100.0 969.0 C1076.2 968.5 1047.0 967.5 1030.0 967.0 C1013.0 966.5 1011.7 966.4 998.0 965.7 C984.3 965.0 961.6 963.8 947.6 962.8 C933.6 961.8 923.8 960.9 914.0 959.8 C904.2 958.7 897.2 957.7 888.8 956.0 C880.4 954.3 870.6 952.0 863.6 949.7 C856.6 947.4 850.6 944.7 846.8 942.2 C843.0 939.8 842.3 937.4 841.0 935.0 C839.7 932.6 839.1 930.3 839.1 928.0 z" fill="url(#mo)"/>
<g clip-path="url(#oclip)">
<ellipse cx="2122" cy="929" rx="30" ry="26" fill="url(#tipsh)"/>
<ellipse cx="862" cy="929" rx="24" ry="26" fill="url(#tipsh)"/>
</g>
<path d="M858.6 929.6 C858.6 927.7 858.7 925.5 859.5 923.5 C860.3 921.5 860.1 919.8 863.6 917.4 C867.1 915.0 872.0 911.7 880.4 909.0 C888.8 906.3 903.1 903.4 914.0 901.4 C924.9 899.4 926.7 898.2 946.0 897.2 C965.3 896.2 992.2 895.8 1030.0 895.5 C1067.8 895.2 1096.3 895.2 1173.0 895.2 C1249.7 895.2 1383.5 895.2 1490.0 895.2 C1596.5 895.2 1732.0 895.2 1812.0 895.2 C1892.0 895.2 1930.4 895.1 1970.0 895.5 C2009.6 895.9 2031.6 896.5 2049.8 897.6 C2068.0 898.7 2070.1 900.6 2079.2 902.3 C2088.3 904.0 2097.5 905.5 2104.5 907.7 C2111.5 909.9 2117.9 912.9 2121.3 915.3 C2124.8 917.7 2124.4 919.6 2125.2 922.0 C2126.0 924.4 2125.9 927.3 2125.9 929.6 C2125.9 931.9 2126.0 933.9 2125.2 936.0 C2124.4 938.1 2124.8 939.9 2121.3 942.2 C2117.9 944.5 2111.5 947.5 2104.5 949.7 C2097.5 951.9 2088.3 953.8 2079.2 955.6 C2070.1 957.4 2068.0 959.1 2049.8 960.3 C2031.6 961.5 2009.6 962.3 1970.0 962.8 C1930.4 963.3 1892.0 963.1 1812.0 963.2 C1732.0 963.3 1596.5 963.2 1490.0 963.2 C1383.5 963.2 1249.7 963.3 1173.0 963.2 C1096.3 963.1 1067.8 962.8 1030.0 962.4 C992.2 962.0 965.3 961.8 946.0 960.7 C926.7 959.6 924.9 958.0 914.0 956.0 C903.1 954.0 888.8 951.1 880.4 948.5 C872.0 945.9 867.1 942.8 863.6 940.5 C860.1 938.2 860.3 936.8 859.5 935.0 C858.7 933.2 858.6 931.5 858.6 929.6 z" fill="url(#mg)"/>
<g clip-path="url(#mclip)">
<rect x="858" y="890" width="90" height="80" fill="url(#mtl)"/>
<rect x="2036" y="890" width="90" height="80" fill="url(#mtr)"/>
<rect x="1360" y="896" width="270" height="67" fill="url(#mc)"/>
<rect x="1040" y="925.300" width="300" height="2.400" fill="url(#hl)"/>
<rect x="1640" y="925.300" width="320" height="2.400" fill="url(#hl)"/>
<path d="M1500 918 Q1530 910 1580 916 Q1640 921 1700 922" stroke="#c8c5bc" stroke-width="2" fill="none" opacity="0.500"/>
<circle cx="1492.500" cy="924.400" r="3.600" fill="url(#msp)"/>
</g>
<path d="M858.6 929.6 C858.6 927.7 858.7 925.5 859.5 923.5 C860.3 921.5 860.1 919.8 863.6 917.4 C867.1 915.0 872.0 911.7 880.4 909.0 C888.8 906.3 903.1 903.4 914.0 901.4 C924.9 899.4 926.7 898.2 946.0 897.2 C965.3 896.2 992.2 895.8 1030.0 895.5 C1067.8 895.2 1096.3 895.2 1173.0 895.2 C1249.7 895.2 1383.5 895.2 1490.0 895.2 C1596.5 895.2 1732.0 895.2 1812.0 895.2 C1892.0 895.2 1930.4 895.1 1970.0 895.5 C2009.6 895.9 2031.6 896.5 2049.8 897.6 C2068.0 898.7 2070.1 900.6 2079.2 902.3 C2088.3 904.0 2097.5 905.5 2104.5 907.7 C2111.5 909.9 2117.9 912.9 2121.3 915.3 C2124.8 917.7 2124.4 919.6 2125.2 922.0 C2126.0 924.4 2125.9 927.3 2125.9 929.6 C2125.9 931.9 2126.0 933.9 2125.2 936.0 C2124.4 938.1 2124.8 939.9 2121.3 942.2 C2117.9 944.5 2111.5 947.5 2104.5 949.7 C2097.5 951.9 2088.3 953.8 2079.2 955.6 C2070.1 957.4 2068.0 959.1 2049.8 960.3 C2031.6 961.5 2009.6 962.3 1970.0 962.8 C1930.4 963.3 1892.0 963.1 1812.0 963.2 C1732.0 963.3 1596.5 963.2 1490.0 963.2 C1383.5 963.2 1249.7 963.3 1173.0 963.2 C1096.3 963.1 1067.8 962.8 1030.0 962.4 C992.2 962.0 965.3 961.8 946.0 960.7 C926.7 959.6 924.9 958.0 914.0 956.0 C903.1 954.0 888.8 951.1 880.4 948.5 C872.0 945.9 867.1 942.8 863.6 940.5 C860.1 938.2 860.3 936.8 859.5 935.0 C858.7 933.2 858.6 931.5 858.6 929.6 z" fill="none" stroke="#111" stroke-width="1.100"/>
<!-- small end wedges -->
<path d="M946 897 Q950 894.200 962 893.800 Q972 893.600 980 894 L975 895.800 z" fill="#8a8a86" stroke="#333" stroke-width="0.700"/>
<path d="M946 961 Q950 963.800 962 964.300 Q972 964.500 980 964 L975 962.200 z" fill="#8a8a86" stroke="#333" stroke-width="0.700"/>
<path d="M2050 897.500 Q2046 894.500 2034 894 Q2024 893.800 2016 894.200 L2021 895.800 z" fill="#8a8a86" stroke="#333" stroke-width="0.700"/>
<path d="M2050 960.500 Q2046 963.500 2034 964 Q2024 964.300 2016 963.800 L2021 962.400 z" fill="#8a8a86" stroke="#333" stroke-width="0.700"/>
<!-- center dark arrowheads -->
<path d="M1438 891.800 Q1444 890 1462 889.800 H1518 Q1536 890 1540.300 891.800 Q1520 893.500 1490 898.600 Q1460 893.500 1438 891.800 z" fill="#4e5050" stroke="#1c1c1c" stroke-width="0.900"/>
<path d="M1438 966.600 Q1444 968.500 1462 968.800 H1518 Q1536 968.500 1540.300 966.600 Q1520 965 1490 960 Q1460 965 1438 966.600 z" fill="#4e5050" stroke="#1c1c1c" stroke-width="0.900"/>
<!-- pivot -->
<circle cx="1511.800" cy="1086" r="20.800" fill="#16e016" stroke="#1f7a30" stroke-width="2.400"/>
<path d="M1491 1086 H1532.600 M1511.800 1065.200 V1106.800" stroke="#156a25" stroke-width="2.600"/>
<path d="M1509.500 1066 V1106" stroke="#0fb020" stroke-width="1.500" opacity="0.700"/>
<text x="1511.500" y="1056.500" font-family="Liberation Sans, sans-serif" font-size="9.200" fill="#74ee84" text-anchor="middle" font-weight="400" letter-spacing="0.500">PIVOT</text>
<!-- ground line -->
<rect x="0" y="1281" width="3024" height="6.400" fill="#454343"/>
<rect x="0" y="1280.500" width="3024" height="0.800" fill="#9a9999"/>
<rect x="0" y="1287.200" width="3024" height="0.800" fill="#9a9999"/>
<rect x="0" y="1283.800" width="3024" height="1.200" fill="#8a2222"/>
<rect x="946" y="1283.100" width="1314" height="0" fill="none"/>
<rect x="946" y="1283.100" width="314" height="2.500" fill="#b68ef2"/>
<circle cx="948" cy="1284.300" r="9.500" fill="none" stroke="#b68ef2" stroke-width="3"/>
<circle cx="1259.300" cy="1284.200" r="9.500" fill="none" stroke="#b68ef2" stroke-width="3"/>
<!-- viewcube -->
<defs>
<linearGradient id="vcg" x1="0" y1="0" x2="0" y2="1"><stop offset="0" stop-color="#e6e6e6"/><stop offset="1" stop-color="#bcbcbc"/></linearGradient>
<linearGradient id="vci" x1="0" y1="0" x2="0" y2="1"><stop offset="0" stop-color="#b4bac6"/><stop offset="1" stop-color="#9ea6b4"/></linearGradient>
<radialGradient id="vsh" cx="0.500" cy="0.500" r="0.500"><stop offset="0" stop-color="#000" stop-opacity="0.550"/><stop offset="0.600" stop-color="#000" stop-opacity="0.300"/><stop offset="1" stop-color="#000" stop-opacity="0"/></radialGradient>
</defs>
<ellipse cx="2894" cy="494" rx="90" ry="10.500" fill="url(#vsh)"/>
<rect x="2842.500" y="383.500" width="105" height="104" fill="url(#vcg)" stroke="#777" stroke-width="1.200" stroke-dasharray="14 5"/>
<rect x="2862" y="402" width="66" height="66.700" fill="url(#vci)"/>
<path d="M2942 379.500 v4" stroke="#2222ee" stroke-width="2"/>
<g fill="#666">
<rect x="21.700" y="1906" width="4" height="23.500"/><path d="M44 1906 V1929.500 L25.700 1917.700 z"/>
<path d="M91.500 1906 V1929.500 L70.300 1917.700 z"/><rect x="92.300" y="1913.500" width="3.700" height="9.500"/>
<path d="M122.400 1902.500 V1932 L146 1917.300 z"/>
<rect x="170.300" y="1913.500" width="3.700" height="9.500"/><path d="M174.800 1906 V1929.500 L195.800 1917.700 z"/>
<path d="M222 1906 V1929.500 L240.400 1917.700 z"/><rect x="240.400" y="1906" width="4" height="23.500"/>
</g>
<rect x="308.2" y="1948" width="1011.4" height="4" fill="#c8c8c8"/>
<rect x="308.2" y="1938" width="3.800" height="11" fill="#c8c8c8"/>
<rect x="354.3" y="1938" width="3.800" height="11" fill="#c8c8c8"/>
<rect x="402.3" y="1938" width="3.800" height="11" fill="#c8c8c8"/>
<rect x="450.2" y="1938" width="3.800" height="11" fill="#c8c8c8"/>
<rect x="498.2" y="1938" width="3.800" height="11" fill="#c8c8c8"/>
<rect x="546.2" y="1938" width="3.800" height="11" fill="#c8c8c8"/>
<rect x="594.2" y="1938" width="3.800" height="11" fill="#c8c8c8"/>
<rect x="642.2" y="1938" width="3.800" height="11" fill="#c8c8c8"/>
<rect x="690.1" y="1938" width="3.800" height="11" fill="#c8c8c8"/>
<rect x="738.1" y="1938" width="3.800" height="11" fill="#c8c8c8"/>
<rect x="786.1" y="1938" width="3.800" height="11" fill="#c8c8c8"/>
<rect x="834.1" y="1938" width="3.800" height="11" fill="#c8c8c8"/>
<rect x="882.1" y="1938" width="3.800" height="11" fill="#c8c8c8"/>
<rect x="930.0" y="1938" width="3.800" height="11" fill="#c8c8c8"/>
<rect x="978.0" y="1938" width="3.800" height="11" fill="#c8c8c8"/>
<rect x="1026.0" y="1938" width="3.800" height="11" fill="#c8c8c8"/>
<rect x="1074.0" y="1938" width="3.800" height="11" fill="#c8c8c8"/>
<rect x="1122.0" y="1938" width="3.800" height="11" fill="#c8c8c8"/>
<rect x="1169.9" y="1938" width="3.800" height="11" fill="#c8c8c8"/>
<rect x="1217.9" y="1938" width="3.800" height="11" fill="#c8c8c8"/>
<rect x="1265.9" y="1938" width="3.800" height="11" fill="#c8c8c8"/>
<rect x="1313.9" y="1938" width="3.800" height="11" fill="#c8c8c8"/>
<defs><filter id="blr" x="-20%" y="-20%" width="140%" height="140%"><feGaussianBlur stdDeviation="0.900"/></filter></defs>
<g transform="translate(292.3,1900.4)"><path d="M4.300 1.550 H25 M4.300 27.750 H15.900" stroke="#8c8c8c" stroke-width="1.600" fill="none"/><path d="M1.550 4.100 V25.400 M27.650 4.100 V14.800" stroke="#6e6e6e" stroke-width="1.450" fill="none"/><path d="M11.100 8.100 H18.300 M8.400 10.800 V18.400" stroke="#808080" stroke-width="1.250" fill="none"/><path d="M21.200 11 Q19.500 19 10.900 21.100" stroke="#5c5c5c" stroke-width="1.250" fill="none"/><g fill="#0b82ea"><rect x="0" y="0" width="3.100" height="3.100"/><rect x="26.200" y="0" width="3.100" height="3.100"/><rect x="0" y="26.400" width="3.100" height="3.100"/><rect x="6.900" y="6.600" width="3.100" height="3.100"/><rect x="19.300" y="6.600" width="3.100" height="3.100"/><rect x="6.900" y="19.500" width="3.100" height="3.100"/></g><path d="M18 24.700 L24.600 18.600 L28.300 22.800 L22 28.900 z" fill="#f9c04c" stroke="#e6a93a" stroke-width="0.500"/><path d="M25.400 17.300 Q26.500 15.200 28.500 15.600 Q31.600 17 31.200 19.800 Q30.800 21.300 29.600 21.700 z" fill="#f4282a"/><path d="M17.400 26.200 L21 29.900 L16.200 31.200 z" fill="#5a5a5a"/></g>
<g transform="translate(340.3,1900.4)"><path d="M4.300 1.550 H25 M4.300 27.750 H15.900" stroke="#8c8c8c" stroke-width="1.600" fill="none"/><path d="M1.550 4.100 V25.400 M27.650 4.100 V14.800" stroke="#6e6e6e" stroke-width="1.450" fill="none"/><path d="M11.100 8.100 H18.300 M8.400 10.800 V18.400" stroke="#808080" stroke-width="1.250" fill="none"/><path d="M21.200 11 Q19.500 19 10.900 21.100" stroke="#5c5c5c" stroke-width="1.250" fill="none"/><g fill="#0b82ea"><rect x="0" y="0" width="3.100" height="3.100"/><rect x="26.200" y="0" width="3.100" height="3.100"/><rect x="0" y="26.400" width="3.100" height="3.100"/><rect x="6.900" y="6.600" width="3.100" height="3.100"/><rect x="19.300" y="6.600" width="3.100" height="3.100"/><rect x="6.900" y="19.500" width="3.100" height="3.100"/></g><path d="M18 24.700 L24.600 18.600 L28.300 22.800 L22 28.900 z" fill="#f9c04c" stroke="#e6a93a" stroke-width="0.500"/><path d="M25.400 17.300 Q26.500 15.200 28.500 15.600 Q31.600 17 31.200 19.800 Q30.800 21.300 29.600 21.700 z" fill="#f4282a"/><path d="M17.400 26.200 L21 29.900 L16.200 31.200 z" fill="#5a5a5a"/></g>
<g transform="translate(388.3,1900.4)"><path d="M4.300 1.550 H25 M4.300 27.750 H15.900" stroke="#8c8c8c" stroke-width="1.600" fill="none"/><path d="M1.550 4.100 V25.400 M27.650 4.100 V14.800" stroke="#6e6e6e" stroke-width="1.450" fill="none"/><path d="M11.100 8.100 H18.300 M8.400 10.800 V18.400" stroke="#808080" stroke-width="1.250" fill="none"/><path d="M21.200 11 Q19.500 19 10.900 21.100" stroke="#5c5c5c" stroke-width="1.250" fill="none"/><g fill="#0b82ea"><rect x="0" y="0" width="3.100" height="3.100"/><rect x="26.200" y="0" width="3.100" height="3.100"/><rect x="0" y="26.400" width="3.100" height="3.100"/><rect x="6.900" y="6.600" width="3.100" height="3.100"/><rect x="19.300" y="6.600" width="3.100" height="3.100"/><rect x="6.900" y="19.500" width="3.100" height="3.100"/></g><path d="M18 24.700 L24.600 18.600 L28.300 22.800 L22 28.900 z" fill="#f9c04c" stroke="#e6a93a" stroke-width="0.500"/><path d="M25.400 17.300 Q26.500 15.200 28.500 15.600 Q31.600 17 31.200 19.800 Q30.800 21.300 29.600 21.700 z" fill="#f4282a"/><path d="M17.400 26.200 L21 29.900 L16.200 31.200 z" fill="#5a5a5a"/></g>
<g transform="translate(436.2,1900.4)"><path d="M4.300 1.550 H25 M4.300 27.750 H15.900" stroke="#8c8c8c" stroke-width="1.600" fill="none"/><path d="M1.550 4.100 V25.400 M27.650 4.100 V14.800" stroke="#6e6e6e" stroke-width="1.450" fill="none"/><path d="M11.100 8.100 H18.300 M8.400 10.800 V18.400" stroke="#808080" stroke-width="1.250" fill="none"/><path d="M21.200 11 Q19.500 19 10.900 21.100" stroke="#5c5c5c" stroke-width="1.250" fill="none"/><g fill="#0b82ea"><rect x="0" y="0" width="3.100" height="3.100"/><rect x="26.200" y="0" width="3.100" height="3.100"/><rect x="0" y="26.400" width="3.100" height="3.100"/><rect x="6.900" y="6.600" width="3.100" height="3.100"/><rect x="19.300" y="6.600" width="3.100" height="3.100"/><rect x="6.900" y="19.500" width="3.100" height="3.100"/></g><path d="M18 24.700 L24.600 18.600 L28.300 22.800 L22 28.900 z" fill="#f9c04c" stroke="#e6a93a" stroke-width="0.500"/><path d="M25.400 17.300 Q26.500 15.200 28.500 15.600 Q31.600 17 31.200 19.800 Q30.800 21.300 29.600 21.700 z" fill="#f4282a"/><path d="M17.400 26.200 L21 29.900 L16.200 31.200 z" fill="#5a5a5a"/></g>
<g transform="translate(484.2,1900.4)"><path d="M4.300 1.550 H25 M4.300 27.750 H15.900" stroke="#8c8c8c" stroke-width="1.600" fill="none"/><path d="M1.550 4.100 V25.400 M27.650 4.100 V14.800" stroke="#6e6e6e" stroke-width="1.450" fill="none"/><path d="M11.100 8.100 H18.300 M8.400 10.800 V18.400" stroke="#808080" stroke-width="1.250" fill="none"/><path d="M21.200 11 Q19.500 19 10.900 21.100" stroke="#5c5c5c" stroke-width="1.250" fill="none"/><g fill="#0b82ea"><rect x="0" y="0" width="3.100" height="3.100"/><rect x="26.200" y="0" width="3.100" height="3.100"/><rect x="0" y="26.400" width="3.100" height="3.100"/><rect x="6.900" y="6.600" width="3.100" height="3.100"/><rect x="19.300" y="6.600" width="3.100" height="3.100"/><rect x="6.900" y="19.500" width="3.100" height="3.100"/></g><path d="M18 24.700 L24.600 18.600 L28.300 22.800 L22 28.900 z" fill="#f9c04c" stroke="#e6a93a" stroke-width="0.500"/><path d="M25.400 17.300 Q26.500 15.200 28.500 15.600 Q31.600 17 31.200 19.800 Q30.800 21.300 29.600 21.700 z" fill="#f4282a"/><path d="M17.400 26.200 L21 29.900 L16.200 31.200 z" fill="#5a5a5a"/></g>
<g transform="translate(532.2,1900.4)"><path d="M4.300 1.550 H25 M4.300 27.750 H15.900" stroke="#8c8c8c" stroke-width="1.600" fill="none"/><path d="M1.550 4.100 V25.400 M27.650 4.100 V14.800" stroke="#6e6e6e" stroke-width="1.450" fill="none"/><path d="M11.100 8.100 H18.300 M8.400 10.800 V18.400" stroke="#808080" stroke-width="1.250" fill="none"/><path d="M21.200 11 Q19.500 19 10.900 21.100" stroke="#5c5c5c" stroke-width="1.250" fill="none"/><g fill="#0b82ea"><rect x="0" y="0" width="3.100" height="3.100"/><rect x="26.200" y="0" width="3.100" height="3.100"/><rect x="0" y="26.400" width="3.100" height="3.100"/><rect x="6.900" y="6.600" width="3.100" height="3.100"/><rect x="19.300" y="6.600" width="3.100" height="3.100"/><rect x="6.900" y="19.500" width="3.100" height="3.100"/></g><path d="M18 24.700 L24.600 18.600 L28.300 22.800 L22 28.900 z" fill="#f9c04c" stroke="#e6a93a" stroke-width="0.500"/><path d="M25.400 17.300 Q26.500 15.200 28.500 15.600 Q31.600 17 31.200 19.800 Q30.800 21.300 29.600 21.700 z" fill="#f4282a"/><path d="M17.400 26.200 L21 29.900 L16.200 31.200 z" fill="#5a5a5a"/></g>
<g transform="translate(580.2,1900.4)"><path d="M4.300 1.550 H25 M4.300 27.750 H15.900" stroke="#8c8c8c" stroke-width="1.600" fill="none"/><path d="M1.550 4.100 V25.400 M27.650 4.100 V14.800" stroke="#6e6e6e" stroke-width="1.450" fill="none"/><path d="M11.100 8.100 H18.300 M8.400 10.800 V18.400" stroke="#808080" stroke-width="1.250" fill="none"/><path d="M21.200 11 Q19.500 19 10.900 21.100" stroke="#5c5c5c" stroke-width="1.250" fill="none"/><g fill="#0b82ea"><rect x="0" y="0" width="3.100" height="3.100"/><rect x="26.200" y="0" width="3.100" height="3.100"/><rect x="0" y="26.400" width="3.100" height="3.100"/><rect x="6.900" y="6.600" width="3.100" height="3.100"/><rect x="19.300" y="6.600" width="3.100" height="3.100"/><rect x="6.900" y="19.500" width="3.100" height="3.100"/></g><path d="M18 24.700 L24.600 18.600 L28.300 22.800 L22 28.900 z" fill="#f9c04c" stroke="#e6a93a" stroke-width="0.500"/><path d="M25.400 17.300 Q26.500 15.200 28.500 15.600 Q31.600 17 31.200 19.800 Q30.800 21.300 29.600 21.700 z" fill="#f4282a"/><path d="M17.400 26.200 L21 29.900 L16.200 31.200 z" fill="#5a5a5a"/></g>
<g filter="url(#blr)"><path d="M634.9 1904.6 Q637.1 1902.2 640.3 1902.2 L649.9 1902.2 Q653.1 1902.2 655.3 1904.5 L657.2 1906.6 Q659.4 1908.9 659.4 1912.1 L659.4 1916.2 Q659.4 1919.4 657.3 1921.9 L652.6 1927.8 Q650.6 1930.3 647.4 1930.3 L637.4 1930.3 Q634.2 1930.3 632.1 1928.0 L632.1 1928.0 Q630.0 1925.7 630.0 1922.5 L630.0 1913.4 Q630.0 1910.2 632.1 1907.8 z" fill="#d2bcf3" stroke="#9474cc" stroke-width="1.800"/><path d="M635.7 1908.0 L639.7 1904.0 H652.2 L654.7 1907.0 L651.7 1909.5 H635.7 z" fill="#b08ce6" opacity="0.800"/><path d="M652.5 1908.5 L658.5 1909.0 V1919.4 L652.5 1927.0 z" fill="#7a58b4"/><rect x="633.3" y="1910.4" width="18" height="17.600" rx="4.500" fill="#a27ce0"/><path d="M641.7 1912.0 V1926.5 M634.7 1919.5 H650.2" stroke="#8e68cc" stroke-width="1.200" opacity="0.600" fill="none"/></g>
<g transform="translate(676.1,1900.4)"><path d="M4.300 1.550 H25 M4.300 27.750 H15.900" stroke="#8c8c8c" stroke-width="1.600" fill="none"/><path d="M1.550 4.100 V25.400 M27.650 4.100 V14.800" stroke="#6e6e6e" stroke-width="1.450" fill="none"/><path d="M11.100 8.100 H18.300 M8.400 10.800 V18.400" stroke="#808080" stroke-width="1.250" fill="none"/><path d="M21.200 11 Q19.500 19 10.900 21.100" stroke="#5c5c5c" stroke-width="1.250" fill="none"/><g fill="#0b82ea"><rect x="0" y="0" width="3.100" height="3.100"/><rect x="26.200" y="0" width="3.100" height="3.100"/><rect x="0" y="26.400" width="3.100" height="3.100"/><rect x="6.900" y="6.600" width="3.100" height="3.100"/><rect x="19.300" y="6.600" width="3.100" height="3.100"/><rect x="6.900" y="19.500" width="3.100" height="3.100"/></g><path d="M18 24.700 L24.600 18.600 L28.300 22.800 L22 28.900 z" fill="#f9c04c" stroke="#e6a93a" stroke-width="0.500"/><path d="M25.400 17.300 Q26.500 15.200 28.500 15.600 Q31.600 17 31.200 19.800 Q30.800 21.300 29.600 21.700 z" fill="#f4282a"/><path d="M17.400 26.200 L21 29.900 L16.200 31.200 z" fill="#5a5a5a"/></g>
<g filter="url(#blr)"><path d="M730.9 1904.6 Q733.0 1902.2 736.2 1902.2 L745.8 1902.2 Q749.0 1902.2 751.2 1904.5 L753.1 1906.6 Q755.3 1908.9 755.3 1912.1 L755.3 1916.2 Q755.3 1919.4 753.3 1921.9 L748.5 1927.8 Q746.5 1930.3 743.3 1930.3 L733.3 1930.3 Q730.1 1930.3 728.0 1928.0 L728.0 1928.0 Q725.9 1925.7 725.9 1922.5 L725.9 1913.4 Q725.9 1910.2 728.0 1907.8 z" fill="#d2bcf3" stroke="#9474cc" stroke-width="1.800"/><path d="M731.6 1908.0 L735.6 1904.0 H748.1 L750.6 1907.0 L747.6 1909.5 H731.6 z" fill="#b08ce6" opacity="0.800"/><path d="M748.4 1908.5 L754.4 1909.0 V1919.4 L748.4 1927.0 z" fill="#7a58b4"/><rect x="729.2" y="1910.4" width="18" height="17.600" rx="4.500" fill="#a27ce0"/><path d="M737.6 1912.0 V1926.5 M730.6 1919.5 H746.1" stroke="#8e68cc" stroke-width="1.200" opacity="0.600" fill="none"/></g>
<g filter="url(#blr)"><path d="M778.9 1904.6 Q781.0 1902.2 784.2 1902.2 L793.8 1902.2 Q797.0 1902.2 799.2 1904.5 L801.1 1906.6 Q803.3 1908.9 803.3 1912.1 L803.3 1916.2 Q803.3 1919.4 801.3 1921.9 L796.5 1927.8 Q794.5 1930.3 791.3 1930.3 L781.3 1930.3 Q778.1 1930.3 776.0 1928.0 L776.0 1928.0 Q773.9 1925.7 773.9 1922.5 L773.9 1913.4 Q773.9 1910.2 776.0 1907.8 z" fill="#d2bcf3" stroke="#9474cc" stroke-width="1.800"/><path d="M779.6 1908.0 L783.6 1904.0 H796.1 L798.6 1907.0 L795.6 1909.5 H779.6 z" fill="#b08ce6" opacity="0.800"/><path d="M796.4 1908.5 L802.4 1909.0 V1919.4 L796.4 1927.0 z" fill="#7a58b4"/><rect x="777.2" y="1910.4" width="18" height="17.600" rx="4.500" fill="#a27ce0"/><path d="M785.6 1912.0 V1926.5 M778.6 1919.5 H794.1" stroke="#8e68cc" stroke-width="1.200" opacity="0.600" fill="none"/></g>
<g transform="translate(820.1,1900.4)"><path d="M4.300 1.550 H25 M4.300 27.750 H15.900" stroke="#8c8c8c" stroke-width="1.600" fill="none"/><path d="M1.550 4.100 V25.400 M27.650 4.100 V14.800" stroke="#6e6e6e" stroke-width="1.450" fill="none"/><path d="M11.100 8.100 H18.300 M8.400 10.800 V18.400" stroke="#808080" stroke-width="1.250" fill="none"/><path d="M21.200 11 Q19.500 19 10.900 21.100" stroke="#5c5c5c" stroke-width="1.250" fill="none"/><g fill="#0b82ea"><rect x="0" y="0" width="3.100" height="3.100"/><rect x="26.200" y="0" width="3.100" height="3.100"/><rect x="0" y="26.400" width="3.100" height="3.100"/><rect x="6.900" y="6.600" width="3.100" height="3.100"/><rect x="19.300" y="6.600" width="3.100" height="3.100"/><rect x="6.900" y="19.500" width="3.100" height="3.100"/></g><path d="M18 24.700 L24.600 18.600 L28.300 22.800 L22 28.900 z" fill="#f9c04c" stroke="#e6a93a" stroke-width="0.500"/><path d="M25.400 17.300 Q26.500 15.200 28.500 15.600 Q31.600 17 31.200 19.800 Q30.800 21.300 29.600 21.700 z" fill="#f4282a"/><path d="M17.400 26.200 L21 29.900 L16.200 31.200 z" fill="#5a5a5a"/></g>
<g filter="url(#blr)"><path d="M874.8 1904.6 Q877.0 1902.2 880.2 1902.2 L889.8 1902.2 Q893.0 1902.2 895.2 1904.5 L897.1 1906.6 Q899.3 1908.9 899.3 1912.1 L899.3 1916.2 Q899.3 1919.4 897.2 1921.9 L892.5 1927.8 Q890.5 1930.3 887.3 1930.3 L877.3 1930.3 Q874.1 1930.3 872.0 1928.0 L872.0 1928.0 Q869.9 1925.7 869.9 1922.5 L869.9 1913.4 Q869.9 1910.2 872.0 1907.8 z" fill="#d2bcf3" stroke="#9474cc" stroke-width="1.800"/><path d="M875.6 1908.0 L879.6 1904.0 H892.1 L894.6 1907.0 L891.6 1909.5 H875.6 z" fill="#b08ce6" opacity="0.800"/><path d="M892.4 1908.5 L898.4 1909.0 V1919.4 L892.4 1927.0 z" fill="#7a58b4"/><rect x="873.2" y="1910.4" width="18" height="17.600" rx="4.500" fill="#a27ce0"/><path d="M881.6 1912.0 V1926.5 M874.6 1919.5 H890.1" stroke="#8e68cc" stroke-width="1.200" opacity="0.600" fill="none"/></g>
<g transform="translate(916.0,1900.4)"><path d="M4.300 1.550 H25 M4.300 27.750 H15.900" stroke="#8c8c8c" stroke-width="1.600" fill="none"/><path d="M1.550 4.100 V25.400 M27.650 4.100 V14.800" stroke="#6e6e6e" stroke-width="1.450" fill="none"/><path d="M11.100 8.100 H18.300 M8.400 10.800 V18.400" stroke="#808080" stroke-width="1.250" fill="none"/><path d="M21.200 11 Q19.500 19 10.900 21.100" stroke="#5c5c5c" stroke-width="1.250" fill="none"/><g fill="#0b82ea"><rect x="0" y="0" width="3.100" height="3.100"/><rect x="26.200" y="0" width="3.100" height="3.100"/><rect x="0" y="26.400" width="3.100" height="3.100"/><rect x="6.900" y="6.600" width="3.100" height="3.100"/><rect x="19.300" y="6.600" width="3.100" height="3.100"/><rect x="6.900" y="19.500" width="3.100" height="3.100"/></g><path d="M18 24.700 L24.600 18.600 L28.300 22.800 L22 28.900 z" fill="#f9c04c" stroke="#e6a93a" stroke-width="0.500"/><path d="M25.400 17.300 Q26.500 15.200 28.500 15.600 Q31.600 17 31.200 19.800 Q30.800 21.300 29.600 21.700 z" fill="#f4282a"/><path d="M17.400 26.200 L21 29.900 L16.200 31.200 z" fill="#5a5a5a"/></g>
<g transform="translate(965.3,1900.2)"><path d="M0 5.800 H18 V26.200 H0 z" fill="#6aafe6"/><path d="M0 5.800 L5.400 0 H23.900 L18 5.800 z" fill="#8fcbfa"/><path d="M18 5.800 L23.900 0 V21.800 L18 26.200 z" fill="#4893ce"/><path d="M0 27.700 H18 V31.600 H0 z" fill="#b6b6b6"/><path d="M18 27.700 L23.900 23 V27 L18 31.600 z" fill="#a0a0a0"/><path d="M27.600 25.500 V4" stroke="#222" stroke-width="1.300"/><path d="M27.600 0.600 l2.600 5 h-5.200 z" fill="#222"/></g>
<g transform="translate(1012.0,1900.4)"><path d="M4.300 1.550 H25 M4.300 27.750 H15.900" stroke="#8c8c8c" stroke-width="1.600" fill="none"/><path d="M1.550 4.100 V25.400 M27.650 4.100 V14.800" stroke="#6e6e6e" stroke-width="1.450" fill="none"/><path d="M11.100 8.100 H18.300 M8.400 10.800 V18.400" stroke="#808080" stroke-width="1.250" fill="none"/><path d="M21.200 11 Q19.500 19 10.900 21.100" stroke="#5c5c5c" stroke-width="1.250" fill="none"/><g fill="#0b82ea"><rect x="0" y="0" width="3.100" height="3.100"/><rect x="26.200" y="0" width="3.100" height="3.100"/><rect x="0" y="26.400" width="3.100" height="3.100"/><rect x="6.900" y="6.600" width="3.100" height="3.100"/><rect x="19.300" y="6.600" width="3.100" height="3.100"/><rect x="6.900" y="19.500" width="3.100" height="3.100"/></g><path d="M18 24.700 L24.600 18.600 L28.300 22.800 L22 28.900 z" fill="#f9c04c" stroke="#e6a93a" stroke-width="0.500"/><path d="M25.400 17.300 Q26.500 15.200 28.500 15.600 Q31.600 17 31.200 19.800 Q30.800 21.300 29.600 21.700 z" fill="#f4282a"/><path d="M17.400 26.200 L21 29.900 L16.200 31.200 z" fill="#5a5a5a"/></g>
<g transform="translate(1060.0,1900.4)"><path d="M4.300 1.550 H25 M4.300 27.750 H15.900" stroke="#8c8c8c" stroke-width="1.600" fill="none"/><path d="M1.550 4.100 V25.400 M27.650 4.100 V14.800" stroke="#6e6e6e" stroke-width="1.450" fill="none"/><path d="M11.100 8.100 H18.300 M8.400 10.800 V18.400" stroke="#808080" stroke-width="1.250" fill="none"/><path d="M21.200 11 Q19.500 19 10.900 21.100" stroke="#5c5c5c" stroke-width="1.250" fill="none"/><g fill="#0b82ea"><rect x="0" y="0" width="3.100" height="3.100"/><rect x="26.200" y="0" width="3.100" height="3.100"/><rect x="0" y="26.400" width="3.100" height="3.100"/><rect x="6.900" y="6.600" width="3.100" height="3.100"/><rect x="19.300" y="6.600" width="3.100" height="3.100"/><rect x="6.900" y="19.500" width="3.100" height="3.100"/></g><path d="M18 24.700 L24.600 18.600 L28.300 22.800 L22 28.900 z" fill="#f9c04c" stroke="#e6a93a" stroke-width="0.500"/><path d="M25.400 17.300 Q26.500 15.200 28.500 15.600 Q31.600 17 31.200 19.800 Q30.800 21.300 29.600 21.700 z" fill="#f4282a"/><path d="M17.400 26.200 L21 29.900 L16.200 31.200 z" fill="#5a5a5a"/></g>
<g transform="translate(1108.0,1900.4)"><path d="M4.300 1.550 H25 M4.300 27.750 H15.900" stroke="#8c8c8c" stroke-width="1.600" fill="none"/><path d="M1.550 4.100 V25.400 M27.650 4.100 V14.800" stroke="#6e6e6e" stroke-width="1.450" fill="none"/><path d="M11.100 8.100 H18.300 M8.400 10.800 V18.400" stroke="#808080" stroke-width="1.250" fill="none"/><path d="M21.200 11 Q19.500 19 10.900 21.100" stroke="#5c5c5c" stroke-width="1.250" fill="none"/><g fill="#0b82ea"><rect x="0" y="0" width="3.100" height="3.100"/><rect x="26.200" y="0" width="3.100" height="3.100"/><rect x="0" y="26.400" width="3.100" height="3.100"/><rect x="6.900" y="6.600" width="3.100" height="3.100"/><rect x="19.300" y="6.600" width="3.100" height="3.100"/><rect x="6.900" y="19.500" width="3.100" height="3.100"/></g><path d="M18 24.700 L24.600 18.600 L28.300 22.800 L22 28.900 z" fill="#f9c04c" stroke="#e6a93a" stroke-width="0.500"/><path d="M25.400 17.300 Q26.500 15.200 28.500 15.600 Q31.600 17 31.200 19.800 Q30.800 21.300 29.600 21.700 z" fill="#f4282a"/><path d="M17.400 26.200 L21 29.900 L16.200 31.200 z" fill="#5a5a5a"/></g>
<g transform="translate(1155.9,1900.4)"><path d="M4.300 1.550 H25 M4.300 27.750 H15.900" stroke="#8c8c8c" stroke-width="1.600" fill="none"/><path d="M1.550 4.100 V25.400 M27.650 4.100 V14.800" stroke="#6e6e6e" stroke-width="1.450" fill="none"/><path d="M11.100 8.100 H18.300 M8.400 10.800 V18.400" stroke="#808080" stroke-width="1.250" fill="none"/><path d="M21.200 11 Q19.500 19 10.900 21.100" stroke="#5c5c5c" stroke-width="1.250" fill="none"/><g fill="#0b82ea"><rect x="0" y="0" width="3.100" height="3.100"/><rect x="26.200" y="0" width="3.100" height="3.100"/><rect x="0" y="26.400" width="3.100" height="3.100"/><rect x="6.900" y="6.600" width="3.100" height="3.100"/><rect x="19.300" y="6.600" width="3.100" height="3.100"/><rect x="6.900" y="19.500" width="3.100" height="3.100"/></g><path d="M18 24.700 L24.600 18.600 L28.300 22.800 L22 28.900 z" fill="#f9c04c" stroke="#e6a93a" stroke-width="0.500"/><path d="M25.400 17.300 Q26.500 15.200 28.500 15.600 Q31.600 17 31.200 19.800 Q30.800 21.300 29.600 21.700 z" fill="#f4282a"/><path d="M17.400 26.200 L21 29.900 L16.200 31.200 z" fill="#5a5a5a"/></g>
<g transform="translate(1203.9,1900.4)"><path d="M4.300 1.550 H25 M4.300 27.750 H15.900" stroke="#8c8c8c" stroke-width="1.600" fill="none"/><path d="M1.550 4.100 V25.400 M27.650 4.100 V14.800" stroke="#6e6e6e" stroke-width="1.450" fill="none"/><path d="M11.100 8.100 H18.300 M8.400 10.800 V18.400" stroke="#808080" stroke-width="1.250" fill="none"/><path d="M21.200 11 Q19.500 19 10.900 21.100" stroke="#5c5c5c" stroke-width="1.250" fill="none"/><g fill="#0b82ea"><rect x="0" y="0" width="3.100" height="3.100"/><rect x="26.200" y="0" width="3.100" height="3.100"/><rect x="0" y="26.400" width="3.100" height="3.100"/><rect x="6.900" y="6.600" width="3.100" height="3.100"/><rect x="19.300" y="6.600" width="3.100" height="3.100"/><rect x="6.900" y="19.500" width="3.100" height="3.100"/></g><path d="M18 24.700 L24.600 18.600 L28.300 22.800 L22 28.900 z" fill="#f9c04c" stroke="#e6a93a" stroke-width="0.500"/><path d="M25.400 17.300 Q26.500 15.200 28.500 15.600 Q31.600 17 31.200 19.800 Q30.800 21.300 29.600 21.700 z" fill="#f4282a"/><path d="M17.400 26.200 L21 29.900 L16.200 31.200 z" fill="#5a5a5a"/></g>
<g filter="url(#blr)"><path d="M1258.7 1904.6 Q1260.8 1902.2 1264.0 1902.2 L1273.6 1902.2 Q1276.8 1902.2 1279.0 1904.5 L1280.9 1906.6 Q1283.1 1908.9 1283.1 1912.1 L1283.1 1916.2 Q1283.1 1919.4 1281.1 1921.9 L1276.3 1927.8 Q1274.3 1930.3 1271.1 1930.3 L1261.1 1930.3 Q1257.9 1930.3 1255.8 1928.0 L1255.8 1928.0 Q1253.7 1925.7 1253.7 1922.5 L1253.7 1913.4 Q1253.7 1910.2 1255.8 1907.8 z" fill="#d2bcf3" stroke="#9474cc" stroke-width="1.800"/><path d="M1259.4 1908.0 L1263.4 1904.0 H1275.9 L1278.4 1907.0 L1275.4 1909.5 H1259.4 z" fill="#b08ce6" opacity="0.800"/><path d="M1276.2 1908.5 L1282.2 1909.0 V1919.4 L1276.2 1927.0 z" fill="#7a58b4"/><rect x="1257.0" y="1910.4" width="18" height="17.600" rx="4.500" fill="#a27ce0"/><path d="M1265.4 1912.0 V1926.5 M1258.4 1919.5 H1273.9" stroke="#8e68cc" stroke-width="1.200" opacity="0.600" fill="none"/></g>
<g transform="translate(1299.9,1900.4)"><path d="M4.300 1.550 H25 M4.300 27.750 H15.900" stroke="#8c8c8c" stroke-width="1.600" fill="none"/><path d="M1.550 4.100 V25.400 M27.650 4.100 V14.800" stroke="#6e6e6e" stroke-width="1.450" fill="none"/><path d="M11.100 8.100 H18.300 M8.400 10.800 V18.400" stroke="#808080" stroke-width="1.250" fill="none"/><path d="M21.200 11 Q19.500 19 10.900 21.100" stroke="#5c5c5c" stroke-width="1.250" fill="none"/><g fill="#0b82ea"><rect x="0" y="0" width="3.100" height="3.100"/><rect x="26.200" y="0" width="3.100" height="3.100"/><rect x="0" y="26.400" width="3.100" height="3.100"/><rect x="6.900" y="6.600" width="3.100" height="3.100"/><rect x="19.300" y="6.600" width="3.100" height="3.100"/><rect x="6.900" y="19.500" width="3.100" height="3.100"/></g><path d="M18 24.700 L24.600 18.600 L28.300 22.800 L22 28.900 z" fill="#f9c04c" stroke="#e6a93a" stroke-width="0.500"/><path d="M25.400 17.300 Q26.500 15.200 28.500 15.600 Q31.600 17 31.200 19.800 Q30.800 21.300 29.600 21.700 z" fill="#f4282a"/><path d="M17.400 26.200 L21 29.900 L16.200 31.200 z" fill="#5a5a5a"/></g>
<path d="M1328 1888 H1352 V1893 L1342.300 1903.500 V1952 H1338 V1903.500 L1328 1893 z" fill="#5a5a5a"/>
<path d="M2991.7,1914.3 L2996.1,1914.6 L2996.1,1919.4 L2991.7,1919.7 L2990.4,1922.7 L2993.4,1926.0 L2990.0,1929.4 L2986.7,1926.4 L2983.7,1927.7 L2983.4,1932.1 L2978.6,1932.1 L2978.3,1927.7 L2975.3,1926.4 L2972.0,1929.4 L2968.6,1926.0 L2971.6,1922.7 L2970.3,1919.7 L2965.9,1919.4 L2965.9,1914.6 L2970.3,1914.3 L2971.6,1911.3 L2968.6,1908.0 L2972.0,1904.6 L2975.3,1907.6 L2978.3,1906.3 L2978.6,1901.9 L2983.4,1901.9 L2983.7,1906.3 L2986.7,1907.6 L2990.0,1904.6 L2993.4,1908.0 L2990.4,1911.3 z M2986.2,1917.0 a5.2,5.2 0 1,0 -10.4,0 a5.2,5.2 0 1,0 10.4,0 z" fill="#808080" fill-rule="evenodd"/>
<path d="M2983 1820.500 a16.600 16.600 0 0 1 16.600 16.600 V1853.700 H2983 a16.600 16.600 0 0 1 0 -33.200 z" fill="#000"/>
<path d="M2973.500 1839.500 L2990.500 1830.500 M2973.500 1842.500 L2991 1833.200 M2984 1842.300 L2991.200 1838.500" stroke="#fff" stroke-width="1.300" fill="none"/><defs>
<linearGradient id="nvA" x1="0" y1="0" x2="1" y2="0"><stop offset="0" stop-color="#fff"/><stop offset="1" stop-color="#c4c8d2"/></linearGradient>
<linearGradient id="nvB" x1="0" y1="0" x2="0" y2="1"><stop offset="0" stop-color="#b6bac4"/><stop offset="1" stop-color="#858994"/></linearGradient>
<linearGradient id="nvL" x1="0" y1="0" x2="0" y2="1"><stop offset="0" stop-color="#cfe6e6"/><stop offset="1" stop-color="#f6fbfb"/></linearGradient>
<linearGradient id="nvG" x1="0" y1="0" x2="0" y2="1"><stop offset="0" stop-color="#fff"/><stop offset="1" stop-color="#8e929e"/></linearGradient>
</defs>
<!-- orbit -->
<ellipse cx="1298.400" cy="1828.800" rx="14" ry="4.300" fill="none" stroke="#3a3f4a" stroke-width="1.500"/>
<path d="M1298.400 1811.800 L1304.700 1818.600 H1302 V1841.200 H1294.700 V1818.600 H1292 z" fill="url(#nvA)" stroke="#3a3f4a" stroke-width="1.200" stroke-linejoin="round"/>
<path d="M1285 1830.800 Q1290 1833.600 1298.400 1833.100 Q1308 1833 1312 1830" fill="none" stroke="#3a3f4a" stroke-width="1.500"/>
<path d="M1287.500 1832.800 l4.200 -3.800 v6.600 z" fill="#3a3f4a"/>
<g fill="#333">
<path d="M1324.100 1824.200 H1336 L1330 1831.800 z"/>
<path d="M1546 1824.200 H1557.900 L1552 1831.600 z"/>
<path d="M1606.100 1824.200 H1618 L1612 1831.600 z"/>
<path d="M1667.900 1824.200 H1679.800 L1673.800 1831.600 z"/>
<path d="M1729.900 1824.200 H1742 L1736 1831.600 z"/>
</g>
<!-- look at -->
<path d="M1351.400 1822 L1358.800 1814.400 V1819.200 L1370.800 1816 V1822.100 z" fill="#b8bcc4" stroke="#3a3f4a" stroke-width="1"/>
<rect x="1350.700" y="1822.700" width="26.800" height="17.600" rx="1" fill="#f4f4f6" stroke="#3a3f4a" stroke-width="1.300"/>
<rect x="1355" y="1826.800" width="18.300" height="9.600" fill="url(#nvB)" stroke="#3a3f4a" stroke-width="1"/>
<!-- hand -->
<path d="M1407.500 1841 Q1405 1833 1401.500 1829.500 Q1400.800 1827 1403.500 1827.200 Q1407 1828.500 1409.500 1832 L1408.500 1816.500 Q1409.500 1814 1411.500 1816.500 L1413.300 1827 L1414 1814 Q1415.500 1811.500 1417.500 1814 L1417.800 1826.500 L1420 1815.500 Q1422 1813.500 1423.300 1816 L1422 1828 L1427.300 1820.800 Q1429.800 1819.500 1430.300 1822.200 Q1427 1829 1425.500 1834 Q1425 1838 1422.500 1841.500 z" fill="#fafafa" stroke="#3a3f4a" stroke-width="1.200" stroke-linejoin="round"/>
<!-- zoom -->
<path d="M1471.500 1830 L1481.200 1839" stroke="#2c303a" stroke-width="3.800" stroke-linecap="round"/>
<circle cx="1463.800" cy="1822.800" r="10.300" fill="url(#nvL)" stroke="#2c303a" stroke-width="1.400"/>
<path d="M1476.400 1816.800 h6.500 M1479.650 1813 v7 M1476.400 1822 h6.500" stroke="#333" stroke-width="1.100" fill="none"/>
<!-- zoom window -->
<rect x="1505" y="1812.800" width="29.600" height="29.600" fill="none" stroke="#666" stroke-width="1" stroke-dasharray="4 2.500"/>
<path d="M1523.600 1831.200 L1533.300 1840.200" stroke="#2c303a" stroke-width="3.800" stroke-linecap="round"/>
<circle cx="1515.900" cy="1823.700" r="10.600" fill="url(#nvL)" stroke="#2c303a" stroke-width="1.400"/>
<!-- monitor -->
<path d="M1582 1835.600 h8 l1 3.500 h-10 z" fill="#c6cad4" stroke="#3a3f4a" stroke-width="0.800"/>
<ellipse cx="1586" cy="1840.200" rx="8.600" ry="1.700" fill="#d8dae0" stroke="#3a3f4a" stroke-width="0.900"/>
<rect x="1571.900" y="1812.900" width="28.400" height="22.400" rx="1.500" fill="#f6f6f8" stroke="#3a3f4a" stroke-width="1.300"/>
<rect x="1574.800" y="1815.900" width="22.600" height="16" rx="1" fill="#9db9e0" stroke="#2a3f7a" stroke-width="1.200"/>
<!-- grid -->
<rect x="1633.500" y="1813.900" width="27.800" height="27.200" rx="1.500" fill="url(#nvG)" stroke="#2c2c30" stroke-width="1.300"/>
<path d="M1637.500 1814 V1841 M1641.400 1814 V1841 M1645.400 1814 V1841 M1649.300 1814 V1841 M1653.300 1814 V1841 M1657.200 1814 V1841 M1634 1817.800 H1661 M1634 1821.700 H1661 M1634 1825.600 H1661 M1634 1829.500 H1661 M1634 1833.400 H1661 M1634 1837.300 H1661" stroke="#4a4a52" stroke-width="0.700" fill="none"/>
<!-- viewports -->
<g fill="#9db9e0" stroke="#2a4a8a" stroke-width="1.300">
<rect x="1695.800" y="1815.600" width="13.400" height="11.500" rx="1.200"/><rect x="1710" y="1815.600" width="13.400" height="11.500" rx="1.200"/>
<rect x="1695.800" y="1827.900" width="13.400" height="11.500" rx="1.200"/><rect x="1710" y="1827.900" width="13.400" height="11.500" rx="1.200"/>
</g>
<g fill="none" stroke="#c4d6ee" stroke-width="0.900">
<rect x="1697.600" y="1817.400" width="9.800" height="7.900"/><rect x="1711.800" y="1817.400" width="9.800" height="7.900"/>
<rect x="1697.600" y="1829.700" width="9.800" height="7.900"/><rect x="1711.800" y="1829.700" width="9.800" height="7.900"/>
</g>
</svg>
<!-- notification -->
<div class="a" style="left:2304px;top:107.500px;width:688px;height:140px;border-radius:33px;z-index:50;background:radial-gradient(ellipse 430px 170px at 66% 105%, #586d7d 0%, rgba(88,109,125,0.55) 45%, rgba(93,111,126,0) 100%), #77777b;box-shadow:0 0 0 1px rgba(60,60,64,0.55), 0 6px 14px rgba(0,0,0,0.22), inset 0 0 0 1.5px rgba(150,150,156,0.55);"></div>
<svg width="3024" height="1964" viewBox="0 0 3024 1964" style="left:0;top:0;z-index:55;"><!-- battery -->
<rect x="2347.500" y="141.600" width="49.800" height="80.200" rx="7" fill="none" stroke="#b8b8bc" stroke-width="1.700"/>
<path d="M2364 137.800 Q2364.500 132 2369 132 H2376 Q2380.500 132 2381.200 137.800 z" fill="#c6c6ca"/>
<path d="M2352 208 H2393 V213 Q2393 217.500 2388.500 217.500 H2356.500 Q2352 217.500 2352 213 z" fill="#ea5b4f"/>
<path d="M2332 207.200 V218.600 L2341.800 212.900 z" fill="#e6e6e8"/>
</svg>
<div class="t" id="t0" style="left:300.0px;top:148.9px;font-size:23px;font-weight:700;color:#0696d7;transform:scaleX(0.9675);transform-origin:0 50%;">SOLID</div>
<div class="t" id="t1" style="left:465.5px;top:148.9px;font-size:23px;font-weight:400;color:#3a3a3a;transform:scaleX(0.8790);transform-origin:0 50%;">SURFACE</div>
<div class="t" id="t2" style="left:652.5px;top:148.9px;font-size:23px;font-weight:400;color:#3a3a3a;transform:scaleX(0.8653);transform-origin:0 50%;">MESH</div>
<div class="t" id="t3" style="left:797.5px;top:148.9px;font-size:23px;font-weight:400;color:#3a3a3a;transform:scaleX(0.9166);transform-origin:0 50%;">SHEET METAL</div>
<div class="t" id="t4" style="left:1034.5px;top:148.9px;font-size:23px;font-weight:400;color:#3a3a3a;transform:scaleX(0.8918);transform-origin:0 50%;">PLASTIC</div>
<div class="t" id="t5" style="left:1210.0px;top:148.9px;font-size:23px;font-weight:400;color:#3a3a3a;transform:scaleX(0.9035);transform-origin:0 50%;">UTILITIES</div>
<div class="t" id="t6" style="left:1396.0px;top:148.9px;font-size:23px;font-weight:400;color:#3a3a3a;transform:scaleX(0.9379);transform-origin:0 50%;">MANAGE</div>
<div class="t" id="t7" style="left:465.5px;top:269.9px;font-size:23px;font-weight:400;color:#3a3a3a;transform:scaleX(0.9007);transform-origin:0 50%;">CREATE</div>
<div class="t" id="t8" style="left:818.0px;top:269.9px;font-size:23px;font-weight:400;color:#3a3a3a;transform:scaleX(0.9708);transform-origin:0 50%;">AUTOMATE</div>
<div class="t" id="t9" style="left:1201.7px;top:269.9px;font-size:23px;font-weight:400;color:#3a3a3a;transform:scaleX(0.9312);transform-origin:0 50%;">MODIFY</div>
<div class="t" id="t10" style="left:1601.0px;top:269.9px;font-size:23px;font-weight:400;color:#3a3a3a;transform:scaleX(0.8629);transform-origin:0 50%;">ASSEMBLE</div>
<div class="t" id="t11" style="left:1833.0px;top:269.9px;font-size:23px;font-weight:400;color:#3a3a3a;transform:scaleX(0.8986);transform-origin:0 50%;">CONFIGURE</div>
<div class="t" id="t12" style="left:2039.6px;top:270.2px;font-size:23px;font-weight:400;color:#3a3a3a;transform:scaleX(0.9170);transform-origin:0 50%;">CONSTRUCT</div>
<div class="t" id="t13" style="left:2247.0px;top:270.2px;font-size:23px;font-weight:400;color:#3a3a3a;transform:scaleX(0.8828);transform-origin:0 50%;">INSPECT</div>
<div class="t" id="t14" style="left:2467.7px;top:270.2px;font-size:23px;font-weight:400;color:#3a3a3a;transform:scaleX(0.8852);transform-origin:0 50%;">INSERT</div>
<div class="t" id="t15" style="left:2685.0px;top:270.2px;font-size:23px;font-weight:400;color:#3a3a3a;transform:scaleX(0.8717);transform-origin:0 50%;">SELECT</div>
<div class="t" id="t16" style="left:82.0px;top:206.4px;font-size:24px;font-weight:700;color:#333;transform:scaleX(0.9020);transform-origin:0 50%;">DESIGN</div>
<div class="t" id="t17" style="left:1464.5px;top:99.5px;font-size:25.5px;font-weight:400;color:#333;transform:scaleX(1.0410);transform-origin:0 50%;">3d project v4</div>
<div class="t" id="t18" style="left:59.0px;top:329.9px;font-size:22px;font-weight:400;color:#555;transform:scaleX(0.8620);transform-origin:0 50%;">BROWSER</div>
<div class="t" id="t19" style="left:197.6px;top:384.9px;font-size:23px;font-weight:700;color:#fff;transform:scaleX(1.0367);transform-origin:0 50%;">3d project v4</div>
<div class="t" id="t20" style="left:175.0px;top:432.9px;font-size:23px;font-weight:400;color:#3a3a3a;transform:scaleX(1.0292);transform-origin:0 50%;">Document Settings</div>
<div class="t" id="t21" style="left:182.0px;top:480.9px;font-size:23px;font-weight:400;color:#3a3a3a;transform:scaleX(1.0001);transform-origin:0 50%;">Named Views</div>
<div class="t" id="t22" style="left:232.0px;top:528.9px;font-size:23px;font-weight:400;color:#3a3a3a;transform:scaleX(1.0593);transform-origin:0 50%;">Origin</div>
<div class="t" id="t23" style="left:232.0px;top:576.9px;font-size:23px;font-weight:400;color:#3a3a3a;transform:scaleX(0.9754);transform-origin:0 50%;">Bodies</div>
<div class="t" id="t24" style="left:232.0px;top:624.9px;font-size:23px;font-weight:400;color:#3a3a3a;transform:scaleX(0.9724);transform-origin:0 50%;">Sketches</div>
<div class="t" id="t25" style="left:58.6px;top:1819.4px;font-size:22px;font-weight:400;color:#555;transform:scaleX(0.9577);transform-origin:0 50%;">COMMENTS</div>
<div class="t" id="t26" style="left:2427.0px;top:131.5px;font-size:27px;font-weight:700;color:#f4f4f4;transform:scaleX(0.9642);transform-origin:0 50%;z-index:60;-webkit-text-stroke:0;">Low Battery</div>
<div class="t" id="t27" style="left:2427.0px;top:164.2px;font-size:26.5px;font-weight:400;color:#f4f4f4;transform:scaleX(1.0214);transform-origin:0 50%;z-index:60;-webkit-text-stroke:0.15px #f4f4f4;">Your Mac will sleep soon unless plugged</div>
<div class="t" id="t28" style="left:2427.0px;top:195.7px;font-size:26.5px;font-weight:400;color:#f4f4f4;transform:scaleX(1.0361);transform-origin:0 50%;z-index:60;-webkit-text-stroke:0.15px #f4f4f4;">into a power outlet.</div>
<div class="t" id="t29" style="left:2866.5px;top:421.5px;font-size:30px;font-weight:700;color:#434b5b;transform:scaleX(0.6750);transform-origin:0 50%;">BACK</div>
<div class="t" id="t30" style="left:2934.0px;top:351.5px;font-size:30px;font-weight:700;color:#0000ff;transform:scaleX(0.8184);transform-origin:0 50%;">Z</div>
<div class="t" id="t31" style="left:2822.0px;top:464.0px;font-size:30px;font-weight:700;color:#ff0000;transform:scaleX(0.7494);transform-origin:0 50%;">X</div>
<div class="t" id="t32" style="left:2944.0px;top:479.5px;font-size:30px;font-weight:700;color:#00ee00;transform:scaleX(0.6995);transform-origin:0 50%;">Y</div>
<div class="t" id="t33" style="left:2958.0px;top:97.0px;font-size:29px;font-weight:400;color:#333;transform:scaleX(0.7960);transform-origin:0 50%;z-index:40;-webkit-text-stroke:0;">VT</div>
</body></html>
